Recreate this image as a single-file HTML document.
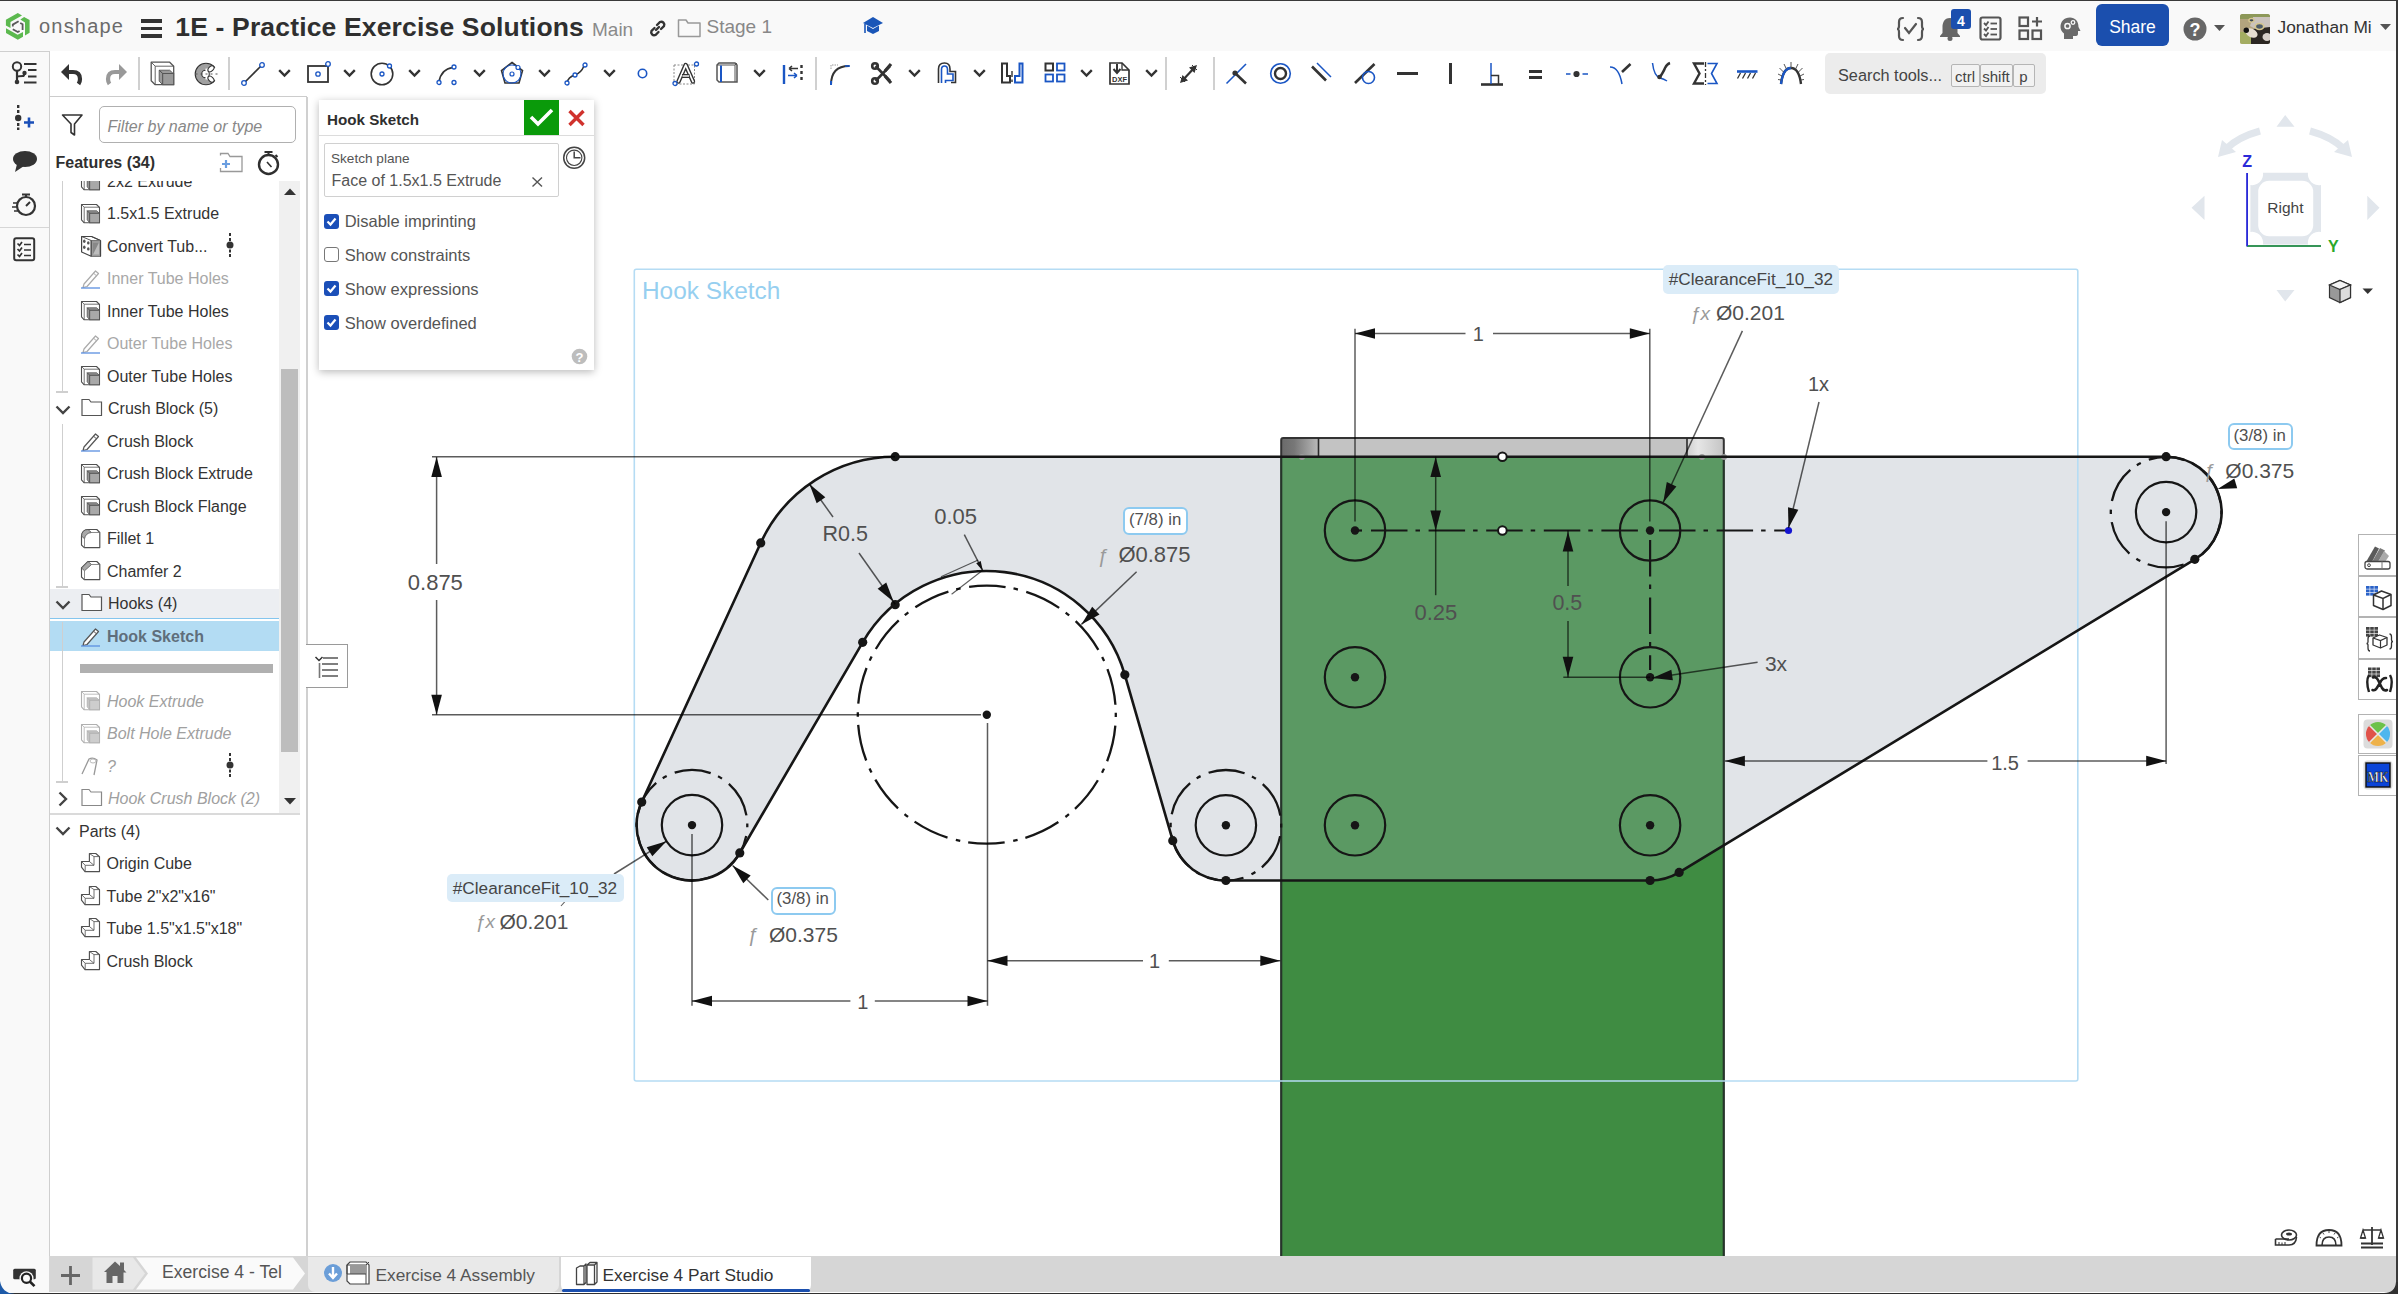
<!DOCTYPE html><html><head><meta charset="utf-8"><style>
html,body{margin:0;padding:0;}
body{width:2398px;height:1294px;position:relative;overflow:hidden;background:#fff;font-family:"Liberation Sans",sans-serif;}
.t{position:absolute;white-space:nowrap;line-height:1;}
svg{overflow:visible;}
</style></head><body>
<svg style="position:absolute;left:0;top:0" width="2398" height="1294" viewBox="0 0 2398 1294"><defs><clipPath id="rg"><path d="M895.20 456.70 L2166.10 456.70 A55.3 55.3 0 0 1 2194.79 559.37 L1679.14 872.38 A55.95957137052125 55.95957137052125 0 0 1 1650.10 880.50 L1225.90 880.50 A55.3 55.3 0 0 1 1172.77 840.65 L1124.85 674.81 A143.7 143.7 0 0 0 862.68 642.29 L739.77 852.97 A55.3 55.3 0 0 1 641.74 802.03 L760.70 542.94 A148.0 148.0 0 0 1 895.20 456.70 Z"/></clipPath><linearGradient id="capL" x1="0" x2="1"><stop offset="0" stop-color="#6a6a6a"/><stop offset="0.35" stop-color="#777"/><stop offset="1" stop-color="#b9b9b9"/></linearGradient><linearGradient id="capR" x1="0" x2="1"><stop offset="0" stop-color="#cfcfcf"/><stop offset="0.3" stop-color="#e6e6e6"/><stop offset="1" stop-color="#c4c4c4"/></linearGradient></defs><path d="M895.20 456.70 L2166.10 456.70 A55.3 55.3 0 0 1 2194.79 559.37 L1679.14 872.38 A55.95957137052125 55.95957137052125 0 0 1 1650.10 880.50 L1225.90 880.50 A55.3 55.3 0 0 1 1172.77 840.65 L1124.85 674.81 A143.7 143.7 0 0 0 862.68 642.29 L739.77 852.97 A55.3 55.3 0 0 1 641.74 802.03 L760.70 542.94 A148.0 148.0 0 0 1 895.20 456.70 Z" fill="#e1e4e8"/><rect x="1281.2" y="457" width="442.5999999999999" height="830" fill="#3f8c42"/><rect x="1281.2" y="457" width="442.5999999999999" height="830" fill="#5b9963" clip-path="url(#rg)"/><rect x="1281.2" y="438" width="442.5999999999999" height="19" fill="#c3c3c3"/><rect x="1281.2" y="438" width="37" height="19" fill="url(#capL)"/><rect x="1687" y="438" width="36.799999999999955" height="19" fill="url(#capR)"/><path d="M1281.2 457 V440 Q1281.2 438 1283.2 438 H1721.8 Q1723.8 438 1723.8 440 V457" fill="none" stroke="#333" stroke-width="2"/><path d="M1318.5 438 V457 M1687 438 V457" stroke="#2a2a2a" stroke-width="1.6"/><path d="M1281.2 457 V1290 M1723.8 457 V1290" stroke="#26342a" stroke-width="2.2"/><circle cx="1302" cy="457" r="3" fill="#9a9a9a"/><circle cx="1702" cy="457" r="3" fill="#9a9a9a"/><circle cx="1724" cy="457" r="3" fill="#9a9a9a"/><rect x="634.3" y="269.3" width="1443.5" height="811.7" rx="2" fill="none" stroke="#b5dcf4" stroke-width="1.6"/><path d="M895.20 456.70 L2166.10 456.70 A55.3 55.3 0 0 1 2194.79 559.37 L1679.14 872.38 A55.95957137052125 55.95957137052125 0 0 1 1650.10 880.50 L1225.90 880.50 A55.3 55.3 0 0 1 1172.77 840.65 L1124.85 674.81 A143.7 143.7 0 0 0 862.68 642.29 L739.77 852.97 A55.3 55.3 0 0 1 641.74 802.03 L760.70 542.94 A148.0 148.0 0 0 1 895.20 456.70" fill="none" stroke="#161616" stroke-width="2.6"/><circle cx="692.0" cy="825.1" r="55.3" fill="none" stroke="#161616" stroke-width="2.3" stroke-dasharray="36.696 8.043 4.524 8.646" stroke-dashoffset="47.002"/><circle cx="1225.9" cy="825.3" r="55.3" fill="none" stroke="#161616" stroke-width="2.3" stroke-dasharray="36.696 8.043 4.524 8.646" stroke-dashoffset="47.002"/><circle cx="2166.1" cy="512.1" r="55.3" fill="none" stroke="#161616" stroke-width="2.3" stroke-dasharray="36.696 8.043 4.524 8.646" stroke-dashoffset="47.002"/><circle cx="986.8" cy="714.7" r="129.0" fill="none" stroke="#161616" stroke-width="2.3" stroke-dasharray="36.687 8.041 4.523 8.644" stroke-dashoffset="46.989"/><circle cx="692.0" cy="825.1" r="30.2" fill="none" stroke="#161616" stroke-width="2.2"/><circle cx="1225.9" cy="825.3" r="30.2" fill="none" stroke="#161616" stroke-width="2.2"/><circle cx="2166.1" cy="512.1" r="30.2" fill="none" stroke="#161616" stroke-width="2.2"/><circle cx="1355" cy="530.5" r="30.2" fill="none" stroke="#161616" stroke-width="2.2"/><circle cx="1650.1" cy="530.5" r="30.2" fill="none" stroke="#161616" stroke-width="2.2"/><circle cx="1355" cy="677.3" r="30.2" fill="none" stroke="#161616" stroke-width="2.2"/><circle cx="1650.1" cy="677.3" r="30.2" fill="none" stroke="#161616" stroke-width="2.2"/><circle cx="1355" cy="825.3" r="30.2" fill="none" stroke="#161616" stroke-width="2.2"/><circle cx="1650.1" cy="825.3" r="30.2" fill="none" stroke="#161616" stroke-width="2.2"/><circle cx="692.0" cy="825.1" r="4.2" fill="#161616"/><circle cx="986.8" cy="714.7" r="4.2" fill="#161616"/><circle cx="1225.9" cy="825.3" r="4.2" fill="#161616"/><circle cx="2166.1" cy="512.1" r="4.2" fill="#161616"/><circle cx="1355" cy="530.5" r="4.2" fill="#161616"/><circle cx="1650.1" cy="530.5" r="4.2" fill="#161616"/><circle cx="1355" cy="677.3" r="4.2" fill="#161616"/><circle cx="1650.1" cy="677.3" r="4.2" fill="#161616"/><circle cx="1355" cy="825.3" r="4.2" fill="#161616"/><circle cx="1650.1" cy="825.3" r="4.2" fill="#161616"/><circle cx="895.20" cy="456.70" r="4.6" fill="#161616"/><circle cx="760.70" cy="542.94" r="4.6" fill="#161616"/><circle cx="641.74" cy="802.03" r="4.6" fill="#161616"/><circle cx="739.77" cy="852.97" r="4.6" fill="#161616"/><circle cx="862.68" cy="642.29" r="4.6" fill="#161616"/><circle cx="895.20" cy="604.70" r="4.6" fill="#161616"/><circle cx="1124.85" cy="674.81" r="4.6" fill="#161616"/><circle cx="1172.77" cy="840.65" r="4.6" fill="#161616"/><circle cx="1225.90" cy="880.50" r="4.6" fill="#161616"/><circle cx="2166.10" cy="456.70" r="4.6" fill="#161616"/><circle cx="2194.79" cy="559.37" r="4.6" fill="#161616"/><circle cx="1650.10" cy="880.50" r="4.6" fill="#161616"/><circle cx="1679.14" cy="872.38" r="4.6" fill="#161616"/><path d="M1355 530.5 H1362" stroke="#161616" stroke-width="2.2"/><path d="M1371 530.5 H1788" stroke="#161616" stroke-width="2.2" stroke-dasharray="36.5 8 4.5 8.6"/><path d="M1650.1 540 V670" stroke="#161616" stroke-width="2.2" stroke-dasharray="36.5 8 4.5 8.6"/><circle cx="1502.4" cy="456.7" r="4.3" fill="#fff" stroke="#161616" stroke-width="2"/><circle cx="1502.4" cy="530.5" r="4.3" fill="#fff" stroke="#161616" stroke-width="2"/><circle cx="1788.5" cy="530.5" r="3.6" fill="#1414d0"/></svg>
<svg style="position:absolute;left:0;top:0" width="2398" height="1294" viewBox="0 0 2398 1294"><path d="M432.00 456.70 L895.00 456.70" stroke="rgba(0,0,0,0.64)" stroke-width="1.5" fill="none"/><path d="M432.00 714.70 L981.00 714.70" stroke="rgba(0,0,0,0.64)" stroke-width="1.5" fill="none"/><path d="M436.60 457.00 L436.60 564.00" stroke="rgba(0,0,0,0.64)" stroke-width="1.5" fill="none"/><path d="M436.60 600.00 L436.60 714.70" stroke="rgba(0,0,0,0.64)" stroke-width="1.5" fill="none"/><path d="M436.60 457.00 L441.90 477.00 L431.30 477.00 Z" fill="#111"/><path d="M436.60 714.70 L431.30 694.70 L441.90 694.70 Z" fill="#111"/><path d="M809.40 484.00 L833.00 517.00" stroke="rgba(0,0,0,0.64)" stroke-width="1.5" fill="none"/><path d="M859.00 553.00 L895.20 604.20" stroke="rgba(0,0,0,0.64)" stroke-width="1.5" fill="none"/><path d="M809.40 484.00 L825.31 497.22 L816.68 503.37 Z" fill="#111"/><path d="M893.60 601.80 L877.63 588.64 L886.24 582.46 Z" fill="#111"/><path d="M964.30 534.60 L982.90 571.00" stroke="rgba(0,0,0,0.64)" stroke-width="1.5" fill="none"/><path d="M941.00 576.80 L978.20 560.10" stroke="rgba(0,0,0,0.64)" stroke-width="1.1" fill="none"/><path d="M951.60 594.20 L981.70 571.00" stroke="rgba(0,0,0,0.64)" stroke-width="1.1" fill="none"/><path d="M982.90 571.00 L976.22 563.15 L980.69 560.93 Z" fill="#111"/><path d="M1136.60 571.80 L1081.40 624.40" stroke="rgba(0,0,0,0.64)" stroke-width="1.5" fill="none"/><path d="M1081.40 624.40 L1092.18 606.74 L1099.51 614.39 Z" fill="#111"/><path d="M1355.00 328.70 L1355.00 521.60" stroke="rgba(0,0,0,0.64)" stroke-width="1.5" fill="none"/><path d="M1649.80 328.70 L1649.80 521.60" stroke="rgba(0,0,0,0.64)" stroke-width="1.5" fill="none"/><path d="M1355.00 333.50 L1465.50 333.50" stroke="rgba(0,0,0,0.64)" stroke-width="1.5" fill="none"/><path d="M1493.00 333.50 L1649.80 333.50" stroke="rgba(0,0,0,0.64)" stroke-width="1.5" fill="none"/><path d="M1355.00 333.50 L1375.00 328.20 L1375.00 338.80 Z" fill="#111"/><path d="M1649.80 333.50 L1629.80 338.80 L1629.80 328.20 Z" fill="#111"/><path d="M1742.40 330.90 L1663.20 502.50" stroke="rgba(0,0,0,0.64)" stroke-width="1.5" fill="none"/><path d="M1663.20 502.50 L1666.79 482.12 L1676.41 486.58 Z" fill="#111"/><path d="M1819.00 402.00 L1788.50 527.90" stroke="rgba(0,0,0,0.64)" stroke-width="1.5" fill="none"/><path d="M1788.50 527.90 L1788.02 507.22 L1798.32 509.69 Z" fill="#111"/><path d="M1435.70 456.70 L1435.70 595.20" stroke="rgba(0,0,0,0.64)" stroke-width="1.5" fill="none"/><path d="M1435.70 456.90 L1441.00 476.90 L1430.40 476.90 Z" fill="#111"/><path d="M1435.70 530.50 L1430.40 510.50 L1441.00 510.50 Z" fill="#111"/><path d="M1568.00 530.50 L1568.00 586.00" stroke="rgba(0,0,0,0.64)" stroke-width="1.5" fill="none"/><path d="M1568.00 621.00 L1568.00 677.30" stroke="rgba(0,0,0,0.64)" stroke-width="1.5" fill="none"/><path d="M1563.30 677.30 L1650.00 677.30" stroke="rgba(0,0,0,0.64)" stroke-width="1.5" fill="none"/><path d="M1568.00 531.50 L1573.30 551.50 L1562.70 551.50 Z" fill="#111"/><path d="M1568.00 676.80 L1562.70 656.80 L1573.30 656.80 Z" fill="#111"/><path d="M1757.60 662.30 L1652.30 677.90" stroke="rgba(0,0,0,0.64)" stroke-width="1.5" fill="none"/><path d="M1652.30 677.90 L1671.34 669.79 L1672.85 680.28 Z" fill="#111"/><path d="M2166.10 521.30 L2166.10 764.00" stroke="rgba(0,0,0,0.64)" stroke-width="1.5" fill="none"/><path d="M1724.90 761.00 L1987.40 761.00" stroke="rgba(0,0,0,0.64)" stroke-width="1.5" fill="none"/><path d="M2027.60 761.00 L2166.20 761.00" stroke="rgba(0,0,0,0.64)" stroke-width="1.5" fill="none"/><path d="M1724.90 761.00 L1744.90 755.70 L1744.90 766.30 Z" fill="#111"/><path d="M2166.20 761.00 L2146.20 766.30 L2146.20 755.70 Z" fill="#111"/><path d="M2217.60 488.90 L2234.31 478.57 L2237.23 488.13 Z" fill="#111"/><path d="M692.00 834.00 L692.00 1005.80" stroke="rgba(0,0,0,0.64)" stroke-width="1.5" fill="none"/><path d="M987.50 723.00 L987.50 1005.80" stroke="rgba(0,0,0,0.64)" stroke-width="1.5" fill="none"/><path d="M692.00 1001.00 L850.40 1001.00" stroke="rgba(0,0,0,0.64)" stroke-width="1.5" fill="none"/><path d="M874.80 1001.00 L987.50 1001.00" stroke="rgba(0,0,0,0.64)" stroke-width="1.5" fill="none"/><path d="M692.00 1001.00 L712.00 995.70 L712.00 1006.30 Z" fill="#111"/><path d="M987.50 1001.00 L967.50 1006.30 L967.50 995.70 Z" fill="#111"/><path d="M987.50 960.80 L1143.00 960.80" stroke="rgba(0,0,0,0.64)" stroke-width="1.5" fill="none"/><path d="M1168.80 960.80 L1280.30 960.80" stroke="rgba(0,0,0,0.64)" stroke-width="1.5" fill="none"/><path d="M987.50 960.80 L1007.50 955.50 L1007.50 966.10 Z" fill="#111"/><path d="M1280.30 960.80 L1260.30 966.10 L1260.30 955.50 Z" fill="#111"/><path d="M614.00 874.00 L666.50 841.20" stroke="rgba(0,0,0,0.64)" stroke-width="1.5" fill="none"/><path d="M666.50 841.20 L652.32 856.27 L646.72 847.27 Z" fill="#111"/><path d="M565.00 901.50 L561.00 906.00" stroke="rgba(0,0,0,0.64)" stroke-width="1.1" fill="none"/><path d="M768.30 900.00 L732.60 865.50" stroke="rgba(0,0,0,0.64)" stroke-width="1.5" fill="none"/><path d="M732.60 865.50 L750.66 875.59 L743.29 883.21 Z" fill="#111"/></svg>
<div class="t" style="left:642.0px;top:278.6px;font-size:24.4px;color:#96cff0;">Hook Sketch</div>
<div class="t" style="left:407.8px;top:571.6px;font-size:22px;color:#505050;">0.875</div>
<div class="t" style="left:822.5px;top:523.8px;font-size:21.5px;color:#505050;">R0.5</div>
<div class="t" style="left:934.2px;top:506.0px;font-size:22px;color:#505050;">0.05</div>
<div style="position:absolute;left:1123px;top:507px;width:61.200000000000045px;height:23.600000000000023px;border:2px solid #8dcaf0;border-radius:6px;background:#fff;"></div>
<div class="t" style="left:1129.0px;top:512.3px;font-size:16.8px;color:#505050;">(7/8) in</div>
<div class="t" style="left:1097.0px;top:545.7px;font-size:20px;color:#9a9a9a;font-style:italic;font-family:"Liberation Serif",serif;">ƒ</div>
<div class="t" style="left:1118.4px;top:544.0px;font-size:22px;color:#505050;">Ø0.875</div>
<div class="t" style="left:1472.7px;top:324.4px;font-size:20px;color:#505050;">1</div>
<div style="position:absolute;left:1662.8px;top:264.8px;width:176.3px;height:29.2px;background:#dbecf8;border-radius:5px;"></div>
<div class="t" style="left:1668.7px;top:271.2px;font-size:17.2px;color:#454545;">#ClearanceFit_10_32</div>
<div class="t" style="left:1690.0px;top:303.9px;font-size:19px;color:#9a9a9a;font-style:italic;font-family:"Liberation Serif",serif;">ƒx</div>
<div class="t" style="left:1716.0px;top:302.2px;font-size:21px;color:#505050;">Ø0.201</div>
<div class="t" style="left:1808.0px;top:373.6px;font-size:20px;color:#505050;">1x</div>
<div class="t" style="left:1414.4px;top:601.9px;font-size:22px;color:#505050;">0.25</div>
<div class="t" style="left:1552.4px;top:593.2px;font-size:21.5px;color:#505050;">0.5</div>
<div class="t" style="left:1764.9px;top:652.8px;font-size:21px;color:#505050;">3x</div>
<div class="t" style="left:1991.2px;top:753.0px;font-size:20px;color:#505050;">1.5</div>
<div style="position:absolute;left:2227.6px;top:422.9px;width:61.40000000000009px;height:23.30000000000001px;border:2px solid #8dcaf0;border-radius:6px;background:#fff;"></div>
<div class="t" style="left:2233.5px;top:427.5px;font-size:16.8px;color:#505050;">(3/8) in</div>
<div class="t" style="left:2203.6px;top:461.1px;font-size:20px;color:#9a9a9a;font-style:italic;font-family:"Liberation Serif",serif;">ƒ</div>
<div class="t" style="left:2225.3px;top:460.2px;font-size:21px;color:#505050;">Ø0.375</div>
<div class="t" style="left:857.2px;top:991.6px;font-size:20px;color:#505050;">1</div>
<div class="t" style="left:1148.9px;top:951.4px;font-size:20px;color:#505050;">1</div>
<div style="position:absolute;left:446.9px;top:874px;width:177.2px;height:28.2px;background:#dbecf8;border-radius:5px;"></div>
<div class="t" style="left:452.8px;top:879.9px;font-size:17.2px;color:#454545;">#ClearanceFit_10_32</div>
<div class="t" style="left:475.0px;top:912.4px;font-size:19px;color:#9a9a9a;font-style:italic;font-family:"Liberation Serif",serif;">ƒx</div>
<div class="t" style="left:499.5px;top:910.7px;font-size:21px;color:#505050;">Ø0.201</div>
<div style="position:absolute;left:770.9px;top:886.5px;width:61.30000000000007px;height:24.100000000000023px;border:2px solid #8dcaf0;border-radius:6px;background:#fff;"></div>
<div class="t" style="left:776.5px;top:891.3px;font-size:16.8px;color:#505050;">(3/8) in</div>
<div class="t" style="left:747.0px;top:924.7px;font-size:20px;color:#9a9a9a;font-style:italic;font-family:"Liberation Serif",serif;">ƒ</div>
<div class="t" style="left:769.0px;top:923.8px;font-size:21px;color:#505050;">Ø0.375</div>
<svg style="position:absolute;left:2180px;top:105px" width="210" height="210" viewBox="2180 105 210 210">
<path d="M2285.2 115.1 L2294.5 126.7 L2276.5 126.7 Z M2285.2 301.5 L2294.5 290 L2276.5 290 Z M2191.5 207.8 L2204.5 195.7 L2204.5 219.9 Z M2379.5 207.8 L2367.3 195.7 L2367.3 219.9 Z" fill="#e1e6ec"/>
<path d="M2260 131 Q2238 137 2226 149" fill="none" stroke="#e1e6ec" stroke-width="7"/>
<path d="M2218 157 L2222 140 L2236 152 Z" fill="#e1e6ec"/>
<path d="M2310 131 Q2332 137 2344 149" fill="none" stroke="#e1e6ec" stroke-width="7"/>
<path d="M2352 157 L2348 140 L2334 152 Z" fill="#e1e6ec"/>
<path d="M2263 172.7 H2308 A11 11 0 0 0 2321 185 V232 A11 11 0 0 0 2308 244.5 H2263 A11 11 0 0 0 2250.4 232 V185 A11 11 0 0 0 2263 172.7 Z" fill="#e1e6ec"/>
<rect x="2258.2" y="180.8" width="55" height="55.4" rx="11" fill="#fff"/>
<path d="M2247.2 173 V246 H2321" fill="none" stroke="#2a2ad8" stroke-width="1.6"/>
<path d="M2321 246 H2247.2" stroke="#2aa82a" stroke-width="1.6"/>
<path d="M2247.2 173 V246" stroke="#2a2ad8" stroke-width="1.6"/>
</svg>
<div class="t" style="left:2285.4px;top:199.6px;font-size:15.5px;color:#444;transform:translateX(-50%);">Right</div>
<div class="t" style="left:2247.2px;top:153.5px;font-size:16px;color:#2a2ad8;font-weight:700;transform:translateX(-50%);">Z</div>
<div class="t" style="left:2333.4px;top:239.1px;font-size:16px;color:#2aa82a;font-weight:700;transform:translateX(-50%);">Y</div>
<svg style="position:absolute;left:2328px;top:279px;" width="25" height="25" viewBox="0 0 25 25"><path d="M12 1.5 L22.5 6 V18.5 L12 23.5 L1.5 18.5 V6 Z" fill="#999" stroke="#333" stroke-width="1.2"/><path d="M1.5 6 L12 10.5 L22.5 6 L12 1.5 Z" fill="#f4f4f4" stroke="#333" stroke-width="1.2"/><path d="M12 10.5 V23.5 L22.5 18.5 V6 Z" fill="#dcdcdc" stroke="#333" stroke-width="1.2"/></svg>
<svg style="position:absolute;left:2362px;top:288px;" width="12" height="7" viewBox="0 0 12 7"><path d="M0.5 0.5 H11 L5.75 6 Z" fill="#333"/></svg>
<div style="position:absolute;left:2358.4px;top:534px;width:40px;height:42.299999999999955px;border:1px solid #b3b3b3;box-sizing:border-box;background:#fff;"></div>
<div style="position:absolute;left:2358.4px;top:576.3px;width:40px;height:40.700000000000045px;border:1px solid #b3b3b3;box-sizing:border-box;background:#fff;"></div>
<div style="position:absolute;left:2358.4px;top:617px;width:40px;height:42px;border:1px solid #b3b3b3;box-sizing:border-box;background:#fff;"></div>
<div style="position:absolute;left:2358.4px;top:659px;width:40px;height:41px;border:1px solid #b3b3b3;box-sizing:border-box;background:#fff;"></div>
<div style="position:absolute;left:2358.4px;top:713.6px;width:40px;height:40.89999999999998px;border:1px solid #b3b3b3;box-sizing:border-box;background:#fff;"></div>
<div style="position:absolute;left:2358.4px;top:754.5px;width:40px;height:41.5px;border:1px solid #b3b3b3;box-sizing:border-box;background:#fff;"></div>
<svg style="position:absolute;left:2363px;top:543px;" width="30" height="28" viewBox="0 0 30 28"><path d="M3 19 L12 3.5 L16 5.5 L9 19 Z" fill="#5a5a5a"/><path d="M9 19 L17 5 L22 7.5 L15 19 Z" fill="#7a7a7a"/><path d="M15 19 L21 8 L26 13 L22 19 Z" fill="#aaa"/><rect x="2" y="18.5" width="25" height="7.5" rx="2" fill="#fff" stroke="#444" stroke-width="1.3"/><circle cx="6" cy="22.2" r="1.4" fill="none" stroke="#444" stroke-width="1"/><path d="M19 18.5 V26" stroke="#777" stroke-width="1"/></svg>
<svg style="position:absolute;left:2364px;top:584px;" width="30" height="28" viewBox="0 0 30 28"><g fill="#2a62c8"><rect x="2.0" y="2.0" width="3.6" height="2.8"/><rect x="2.0" y="5.4" width="3.6" height="2.8"/><rect x="2.0" y="8.8" width="3.6" height="2.8"/><rect x="6.2" y="2.0" width="3.6" height="2.8"/><rect x="6.2" y="5.4" width="3.6" height="2.8"/><rect x="6.2" y="8.8" width="3.6" height="2.8"/><rect x="10.4" y="2.0" width="3.6" height="2.8"/><rect x="10.4" y="5.4" width="3.6" height="2.8"/><rect x="10.4" y="8.8" width="3.6" height="2.8"/></g><path d="M9.5 11 L17.5 7 L27 10.5 V21.5 L19 25.5 L9.5 21.5 Z" fill="#fff" stroke="#333" stroke-width="1.5" stroke-linejoin="round"/><path d="M9.5 11 L19 14.5 L27 10.5 M19 14.5 V25.5" fill="none" stroke="#333" stroke-width="1.5"/></svg>
<svg style="position:absolute;left:2364px;top:625px;" width="30" height="28" viewBox="0 0 30 28"><g fill="#444"><rect x="2.0" y="2.0" width="3.6" height="2.8"/><rect x="2.0" y="5.4" width="3.6" height="2.8"/><rect x="2.0" y="8.8" width="3.6" height="2.8"/><rect x="6.2" y="2.0" width="3.6" height="2.8"/><rect x="6.2" y="5.4" width="3.6" height="2.8"/><rect x="6.2" y="8.8" width="3.6" height="2.8"/><rect x="10.4" y="2.0" width="3.6" height="2.8"/><rect x="10.4" y="5.4" width="3.6" height="2.8"/><rect x="10.4" y="8.8" width="3.6" height="2.8"/></g><path d="M9 13 L15.5 10 L23 12.5 V20 L16.5 23 L9 20 Z" fill="#fff" stroke="#333" stroke-width="1.3" stroke-linejoin="round"/><path d="M9 13 L16.5 15.5 L23 12.5 M16.5 15.5 V23" fill="none" stroke="#333" stroke-width="1.2"/><path d="M6 11 Q4 11 4 14 V17 Q4 18.5 2.5 18.5 Q4 18.5 4 20 V23 Q4 26 6 26 M25.5 9 Q27.5 9 27.5 12 V15 Q27.5 16.5 29 16.5 Q27.5 16.5 27.5 18 V21 Q27.5 24 25.5 24" fill="none" stroke="#333" stroke-width="1.3"/></svg>
<svg style="position:absolute;left:2364px;top:666px;" width="30" height="28" viewBox="0 0 30 28"><g fill="#444"><rect x="4.0" y="1.5" width="3.6" height="2.8"/><rect x="4.0" y="4.9" width="3.6" height="2.8"/><rect x="4.0" y="8.3" width="3.6" height="2.8"/><rect x="8.2" y="1.5" width="3.6" height="2.8"/><rect x="8.2" y="4.9" width="3.6" height="2.8"/><rect x="8.2" y="8.3" width="3.6" height="2.8"/><rect x="12.4" y="1.5" width="3.6" height="2.8"/><rect x="12.4" y="4.9" width="3.6" height="2.8"/><rect x="12.4" y="8.3" width="3.6" height="2.8"/></g><path d="M5 9 Q1.5 15 5 26 M26 9 Q29.5 15 26 26" fill="none" stroke="#222" stroke-width="2.4"/><path d="M9 11.5 Q12 10 14 14 L18 22 Q20 25.5 23 24 M22 12 Q18 12 16 17 L12.5 22.5 Q11 25 8.5 24" fill="none" stroke="#222" stroke-width="2.6" stroke-linecap="round"/></svg>
<svg style="position:absolute;left:2363px;top:719px;" width="30" height="30" viewBox="0 0 30 30"><rect x="0.5" y="0.5" width="29" height="29" rx="4" fill="#dcdcdc"/><path d="M15 15 L6.5 6.5 A12 12 0 0 1 23.5 6.5 Z" fill="#6cc24a"/><path d="M15 15 L23.5 6.5 A12 12 0 0 1 23.5 23.5 Z" fill="#4fb6ee"/><path d="M15 15 L23.5 23.5 A12 12 0 0 1 6.5 23.5 Z" fill="#eeb24a"/><path d="M15 15 L6.5 23.5 A12 12 0 0 1 6.5 6.5 Z" fill="#e0524a"/><path d="M6.5 6.5 L23.5 23.5 M23.5 6.5 L6.5 23.5" stroke="#e8e8e8" stroke-width="1.6"/></svg>
<svg style="position:absolute;left:2363px;top:760px;" width="30" height="30" viewBox="0 0 30 30"><rect x="0.5" y="0.5" width="29" height="29" rx="4" fill="#dcdcdc"/><rect x="3" y="3" width="24" height="24" fill="#0a44d8" stroke="#111" stroke-width="1.4"/><text x="15" y="21.5" font-family="Liberation Serif" font-weight="700" font-size="15" fill="#fff" text-anchor="middle" textLength="21" lengthAdjust="spacingAndGlyphs" stroke="#111" stroke-width="0.6">MK</text></svg>
<div style="position:absolute;left:0px;top:0px;width:2398px;height:52px;background:#f9f9f9;"></div>
<div style="position:absolute;left:0px;top:0px;width:2398px;height:1px;background:#3a3a3a;"></div>
<svg style="position:absolute;left:0px;top:8px;" width="40" height="38" viewBox="0 0 40 38"><g fill="#5cb94f"><path d="M5.9 11.8 L17.8 5 L22 7.4 L10.5 14 V20 L5.9 17.5 Z"/><path d="M20.3 11.4 L24.1 9 L29.6 12 V24.8 L25 27.4 V14.4 Z"/><path d="M6 20.3 L17.6 26.7 L23 23.9 V28.7 L17.8 31.7 L6 25 Z"/></g>
<g fill="none" stroke="#5a5a5a" stroke-width="1.8"><path d="M18.6 13.2 L12.8 16.6 V18.4"/><path d="M12.8 21.2 L17.8 24 L19.6 23"/><path d="M20.2 15 L22.6 16.3 V22"/></g></svg>
<div class="t" style="left:39.0px;top:15.5px;font-size:20px;color:#6b6b6b;letter-spacing:1.2px;">onshape</div>
<div style="position:absolute;left:141px;top:19px;width:21px;height:3.5px;background:#333;"></div>
<div style="position:absolute;left:141px;top:26.5px;width:21px;height:3.5px;background:#333;"></div>
<div style="position:absolute;left:141px;top:34px;width:21px;height:3.5px;background:#333;"></div>
<div class="t" style="left:175.3px;top:14.1px;font-size:26.5px;color:#2f2f2f;font-weight:700;letter-spacing:0.16px;">1E - Practice Exercise Solutions</div>
<div class="t" style="left:592.0px;top:19.8px;font-size:19px;color:#8a8a8a;">Main</div>
<svg style="position:absolute;left:647px;top:18px;" width="21" height="21" viewBox="0 0 21 21"><g fill="none" stroke="#333" stroke-width="2.4" stroke-linecap="round"><path d="M9 12 L12 9"/><path d="M7.5 10 L4.5 13 a3 3 0 0 0 4 4 L11.5 14"/><path d="M10 7 L13 4 a3 3 0 0 1 4 4 L14 11"/></g></svg>
<svg style="position:absolute;left:677px;top:18px;" width="25" height="20" viewBox="0 0 25 20"><path d="M1.5 2 H9 L11 5 H23 V18.5 H1.5 Z" fill="none" stroke="#999" stroke-width="1.5" stroke-linejoin="round"/></svg>
<div class="t" style="left:706.5px;top:17.4px;font-size:19px;color:#888;">Stage 1</div>
<svg style="position:absolute;left:862px;top:15px;" width="22" height="21" viewBox="0 0 22 21"><path d="M1 8 L11 2 L21 8 L11 13 Z" fill="#1a56b8"/><path d="M5 10.5 V16 L11 19 L17 16 V10.5 L11 14 Z" fill="#1a56b8"/><path d="M3 9 V18" stroke="#1a56b8" stroke-width="1.6"/></svg>
<svg style="position:absolute;left:1896px;top:16px;" width="29" height="26" viewBox="0 0 29 26"><g fill="none" stroke="#555" stroke-width="2.2" stroke-linecap="round"><path d="M7 2 Q3 2 3 6 V10 Q3 13 1 13 Q3 13 3 16 V20 Q3 24 7 24"/><path d="M22 2 Q26 2 26 6 V10 Q26 13 28 13 Q26 13 26 16 V20 Q26 24 22 24"/><path d="M9 12 L13 17 L20 8"/></g></svg>
<svg style="position:absolute;left:1938px;top:16px;" width="24" height="25" viewBox="0 0 24 25"><path d="M12 2 C6 2 4.5 7 4.5 11 V17 L2 20 V21 H22 V20 L19.5 17 V11 C19.5 7 18 2 12 2 Z" fill="#666"/><circle cx="12" cy="22.5" r="2.5" fill="#666"/></svg>
<div style="position:absolute;left:1951px;top:9px;width:20px;height:20px;background:#1b4fae;border-radius:3px;"></div>
<div class="t" style="left:1961.0px;top:13.5px;font-size:14px;color:#fff;font-weight:700;transform:translateX(-50%);">4</div>
<svg style="position:absolute;left:1979px;top:16px;" width="23" height="25" viewBox="0 0 23 25"><rect x="1.5" y="1.5" width="20" height="22" rx="2" fill="none" stroke="#555" stroke-width="2.2"/><g stroke="#555" stroke-width="1.8" fill="none"><path d="M5 7 L7 9 L9.5 5.5"/><path d="M5 12.5 L7 14.5 L9.5 11"/><path d="M5 18 L7 20 L9.5 16.5"/><path d="M11.5 7.5 H18"/><path d="M11.5 13 H18"/><path d="M11.5 18.5 H18"/></g></svg>
<svg style="position:absolute;left:2018px;top:16px;" width="26" height="25" viewBox="0 0 26 25"><g fill="none" stroke="#555" stroke-width="2.2"><rect x="1.5" y="1.5" width="8.5" height="8.5"/><rect x="1.5" y="14.5" width="8.5" height="8.5"/><rect x="14.5" y="14.5" width="8.5" height="8.5"/><path d="M19 1 V10.5 M14 5.5 H24"/></g></svg>
<svg style="position:absolute;left:2059px;top:16px;" width="24" height="25" viewBox="0 0 24 25"><path d="M11 1.5 C5 1.5 1.5 5.5 1.5 11 C1.5 14 3 16 5 17.5 V23 H14 V20 H17 C18.5 20 19 19 19 17.5 V15 H21.5 L19.5 11 C19.5 5 16 1.5 11 1.5 Z" fill="#6a6a6a"/><circle cx="8.5" cy="10" r="2.6" fill="none" stroke="#f9f9f9" stroke-width="1.5"/><circle cx="14" cy="6.5" r="1.8" fill="none" stroke="#f9f9f9" stroke-width="1.3"/></svg>
<div style="position:absolute;left:2096px;top:4px;width:73px;height:42px;background:#1b4fae;border-radius:6px;"></div>
<div class="t" style="left:2132.5px;top:18.5px;font-size:17.5px;color:#fff;transform:translateX(-50%);">Share</div>
<svg style="position:absolute;left:2182px;top:16px;" width="26" height="26" viewBox="0 0 26 26"><circle cx="13" cy="13" r="11.5" fill="#676767"/><text x="13" y="19.5" font-family="Liberation Sans" font-weight="700" font-size="18" fill="#fff" text-anchor="middle">?</text></svg>
<svg style="position:absolute;left:2213px;top:24px;" width="13" height="8" viewBox="0 0 13 8"><path d="M1 1 H12 L6.5 7 Z" fill="#555"/></svg>
<svg style="position:absolute;left:2240px;top:14px;" width="30" height="30" viewBox="0 0 30 30"><defs><clipPath id="avc"><rect width="30" height="30" rx="2.5"/></clipPath></defs><g clip-path="url(#avc)">
<rect width="30" height="30" fill="#b3a47e"/><rect x="0" y="0" width="30" height="5" fill="#8d9858"/><rect x="0" y="18" width="11" height="12" fill="#a4ad62"/>
<path d="M13 3 H30 V18 H21 L10 12 Z" fill="#cbc3bc"/>
<path d="M13 15 L30 13 V30 H11 V22 Z" fill="#2b2622"/>
<ellipse cx="27" cy="23" rx="4.5" ry="4" fill="#d6cec8"/>
<ellipse cx="11.5" cy="19" rx="6.5" ry="4.2" transform="rotate(28 11.5 19)" fill="#e6ddd0"/>
<circle cx="6.3" cy="16.2" r="2.7" fill="#111"/>
<ellipse cx="19.5" cy="12.5" rx="4.2" ry="3" fill="#4e5c6a" stroke="#d6c68e" stroke-width="1.7"/>
<ellipse cx="11.5" cy="6.3" rx="2.6" ry="1.8" fill="#3e4a56" stroke="#d6c68e" stroke-width="1.4"/>
</g></svg>
<div class="t" style="left:2277.5px;top:19.2px;font-size:17.3px;color:#333;">Jonathan Mi</div>
<svg style="position:absolute;left:2379px;top:23px;" width="13" height="8" viewBox="0 0 13 8"><path d="M1 1 H12 L6.5 7 Z" fill="#555"/></svg>
<div style="position:absolute;left:0px;top:51px;width:50px;height:1243px;background:#f9f9f9;"></div>
<div style="position:absolute;left:50px;top:51px;width:2348px;height:46px;background:#fff;"></div>
<div style="position:absolute;left:0px;top:51px;width:50px;height:1px;background:#cfcfcf;"></div>
<div style="position:absolute;left:49px;top:51px;width:1px;height:1205px;background:#cfcfcf;"></div>
<div style="position:absolute;left:50px;top:96px;width:257px;height:1px;background:#cccccc;"></div>
<svg style="position:absolute;left:11px;top:61px;" width="28" height="26" viewBox="0 0 28 26"><circle cx="6" cy="5.5" r="4.2" fill="none" stroke="#333" stroke-width="2"/><path d="M6 10 V21 M6 16 Q6 15 12 15 Q13 15 13.5 12" fill="none" stroke="#333" stroke-width="2.2"/><circle cx="6" cy="21" r="2.3" fill="#333"/><circle cx="13.5" cy="12" r="2.2" fill="#333"/><g stroke="#333" stroke-width="2.2"><path d="M13 3 H25.5 M17 9 H25.5 M17 15.5 H25.5 M13 21.5 H25.5"/></g></svg>
<svg style="position:absolute;left:15px;top:104px;" width="24" height="26" viewBox="0 0 24 26"><g fill="#333"><rect x="2" y="1" width="2.4" height="3"/><rect x="2" y="6" width="2.4" height="3"/><circle cx="3.2" cy="14" r="3.2"/><rect x="2" y="19" width="2.4" height="3"/><rect x="2" y="23.5" width="2.4" height="2.5"/></g><path d="M9 18.5 H19 M14 13.5 V23.5" stroke="#1a4fb8" stroke-width="2.6"/></svg>
<svg style="position:absolute;left:12px;top:150px;" width="26" height="24" viewBox="0 0 26 24"><ellipse cx="13" cy="9" rx="12" ry="8" fill="#333"/><path d="M5 14 L3 22 L12 16 Z" fill="#333"/></svg>
<svg style="position:absolute;left:12px;top:192px;" width="26" height="26" viewBox="0 0 26 26"><circle cx="14" cy="14" r="9" fill="none" stroke="#333" stroke-width="2.2"/><path d="M10 2.5 H18 M14 3 V5" stroke="#333" stroke-width="2"/><path d="M14 14 L18 10" stroke="#333" stroke-width="2"/><path d="M1 11 H6 M0 15 H5 M2 19 H6" stroke="#333" stroke-width="1.6"/></svg>
<div style="position:absolute;left:0px;top:227px;width:49px;height:1px;background:#d6d6d6;"></div>
<svg style="position:absolute;left:13px;top:237px;" width="23" height="25" viewBox="0 0 23 25"><rect x="1.2" y="1.2" width="20" height="22" rx="2" fill="none" stroke="#333" stroke-width="2"/><g stroke="#333" stroke-width="1.7" fill="none"><path d="M4.5 6.5 L6.5 8.5 L9 5"/><path d="M4.5 12 L6.5 14 L9 10.5"/><path d="M4.5 17.5 L6.5 19.5 L9 16"/><path d="M11 7.5 H18 M11 13 H18 M11 18.5 H18"/></g></svg>
<svg style="position:absolute;left:59px;top:61px;" width="26" height="25" viewBox="0 0 26 25"><path d="M10 3 L2 11 L10 19 Z" fill="#333"/><path d="M9 11 H14 Q21 11 21 18 Q21 21 19.5 23" fill="none" stroke="#333" stroke-width="4.2"/></svg>
<svg style="position:absolute;left:103px;top:61px;" width="26" height="25" viewBox="0 0 26 25"><path d="M16 3 L24 11 L16 19 Z" fill="#999"/><path d="M17 11 H12 Q5 11 5 18 Q5 21 6.5 23" fill="none" stroke="#999" stroke-width="4.2"/></svg>
<div style="position:absolute;left:138px;top:57px;width:2px;height:33px;background:#d0d0d0;"></div>
<svg style="position:absolute;left:150px;top:61px;" width="25" height="25" viewBox="0 0 25 25"><path d="M1.2 1.2 H19.7 L23.7 5.2 V23.7 H5.2 L1.2 19.7 Z" fill="#fff" stroke="#555" stroke-width="1.3" stroke-linejoin="round"/><path d="M1.2 1.2 L5.2 5.2 H23.7 M5.2 5.2 V23.7" fill="none" stroke="#555" stroke-width="0.9"/><path d="M9.2 9.2 H19.7 L23.2 12.5 H12.7 Z M9.2 9.2 L12.7 12.5 V23.7 L9.2 20.2 Z" fill="#999" stroke="#555" stroke-width="0.9" stroke-linejoin="round"/><rect x="12.7" y="12.5" width="11" height="11.2" fill="#9a9a9a" stroke="#555" stroke-width="1"/></svg>
<svg style="position:absolute;left:194px;top:61px;" width="26" height="26" viewBox="0 0 26 26"><circle cx="12" cy="13" r="10.8" fill="#a0a0a0" stroke="#333" stroke-width="1.1"/><path d="M11.5 13 L25 4 V22 Z" fill="#fff"/><circle cx="11.5" cy="13" r="3.8" fill="#fff" stroke="#333" stroke-width="1.1"/><path d="M11.5 9.2 L16 8.5 M11.5 16.8 L16 17.5" stroke="#fff" stroke-width="3"/><ellipse cx="17" cy="7.8" rx="2.3" ry="3.6" transform="rotate(45 17 7.8)" fill="#fff" stroke="#333" stroke-width="1.1"/><ellipse cx="17" cy="18.2" rx="2.3" ry="3.6" transform="rotate(-45 17 18.2)" fill="#fff" stroke="#333" stroke-width="1.1"/><path d="M1.5 13 H24" stroke="#555" stroke-width="1.1" stroke-dasharray="2 3"/></svg>
<div style="position:absolute;left:228px;top:57px;width:2px;height:33px;background:#d0d0d0;"></div>
<svg style="position:absolute;left:240px;top:61px;" width="26" height="26" viewBox="0 0 26 26"><path d="M4.5 21.5 L21.5 4.5" stroke="#333" stroke-width="1.7"/><circle cx="4" cy="22" r="2.3" fill="#fff" stroke="#1a56c4" stroke-width="1.3"/><circle cx="22" cy="4" r="2.3" fill="#fff" stroke="#1a56c4" stroke-width="1.3"/></svg>
<svg style="position:absolute;left:278px;top:69px;" width="13" height="8" viewBox="0 0 13 8"><path d="M1.2 1.2 L6.5 6.5 L11.8 1.2" fill="none" stroke="#333" stroke-width="2.4"/></svg>
<svg style="position:absolute;left:306px;top:59.5px;" width="26" height="24" viewBox="0 0 26 24"><rect x="2" y="6" width="20" height="16" fill="none" stroke="#333" stroke-width="1.8"/><circle cx="12" cy="14" r="2.2" fill="none" stroke="#1a56c4" stroke-width="1.3"/><circle cx="22" cy="4" r="2.3" fill="#fff" stroke="#1a56c4" stroke-width="1.3"/></svg>
<svg style="position:absolute;left:343px;top:69px;" width="13" height="8" viewBox="0 0 13 8"><path d="M1.2 1.2 L6.5 6.5 L11.8 1.2" fill="none" stroke="#333" stroke-width="2.4"/></svg>
<svg style="position:absolute;left:370px;top:61px;" width="26" height="26" viewBox="0 0 26 26"><circle cx="12" cy="13" r="10.8" fill="none" stroke="#333" stroke-width="1.6"/><circle cx="12" cy="13" r="2" fill="none" stroke="#1a56c4" stroke-width="1.3"/><circle cx="19.5" cy="5" r="2" fill="#fff" stroke="#1a56c4" stroke-width="1.3"/></svg>
<svg style="position:absolute;left:408px;top:69px;" width="13" height="8" viewBox="0 0 13 8"><path d="M1.2 1.2 L6.5 6.5 L11.8 1.2" fill="none" stroke="#333" stroke-width="2.4"/></svg>
<svg style="position:absolute;left:436px;top:61px;" width="26" height="26" viewBox="0 0 26 26"><path d="M3 21 Q5 8 17 6.5" fill="none" stroke="#333" stroke-width="1.7"/><circle cx="3" cy="21.5" r="2" fill="#fff" stroke="#1a56c4" stroke-width="1.3"/><circle cx="18" cy="6" r="2" fill="#fff" stroke="#1a56c4" stroke-width="1.3"/><circle cx="18" cy="21.5" r="2" fill="#fff" stroke="#1a56c4" stroke-width="1.3"/></svg>
<svg style="position:absolute;left:473px;top:69px;" width="13" height="8" viewBox="0 0 13 8"><path d="M1.2 1.2 L6.5 6.5 L11.8 1.2" fill="none" stroke="#333" stroke-width="2.4"/></svg>
<svg style="position:absolute;left:500px;top:61px;" width="25" height="25" viewBox="0 0 25 25"><path d="M12 1.5 L22.5 9.5 L19 22 H5 L1.5 9.5 Z" fill="none" stroke="#333" stroke-width="1.6"/><circle cx="12" cy="13" r="9" fill="none" stroke="#1a56c4" stroke-width="1.1"/><circle cx="12" cy="13" r="2" fill="none" stroke="#1a56c4" stroke-width="1.2"/><circle cx="18" cy="6.5" r="2" fill="#fff" stroke="#1a56c4" stroke-width="1.2"/></svg>
<svg style="position:absolute;left:538px;top:69px;" width="13" height="8" viewBox="0 0 13 8"><path d="M1.2 1.2 L6.5 6.5 L11.8 1.2" fill="none" stroke="#333" stroke-width="2.4"/></svg>
<svg style="position:absolute;left:564px;top:61px;" width="27" height="26" viewBox="0 0 27 26"><path d="M3 22 Q4 16 11 14 Q17 12 20 5" fill="none" stroke="#333" stroke-width="1.6"/><circle cx="3" cy="22" r="2" fill="#fff" stroke="#1a56c4" stroke-width="1.3"/><circle cx="11" cy="14" r="2" fill="#fff" stroke="#1a56c4" stroke-width="1.3"/><circle cx="21" cy="4" r="2" fill="#fff" stroke="#1a56c4" stroke-width="1.3"/></svg>
<svg style="position:absolute;left:603px;top:69px;" width="13" height="8" viewBox="0 0 13 8"><path d="M1.2 1.2 L6.5 6.5 L11.8 1.2" fill="none" stroke="#333" stroke-width="2.4"/></svg>
<svg style="position:absolute;left:636px;top:67px;" width="13" height="13" viewBox="0 0 13 13"><circle cx="6.5" cy="6.5" r="4.2" fill="none" stroke="#1a56c4" stroke-width="1.6"/></svg>
<svg style="position:absolute;left:672px;top:61px;" width="28" height="26" viewBox="0 0 28 26"><rect x="2" y="4" width="20.5" height="19" fill="none" stroke="#888" stroke-width="1" stroke-dasharray="2 1.5"/><path d="M6.5 20.5 L13.7 4 L21 20.5" fill="none" stroke="#333" stroke-width="4.4" stroke-linejoin="round" stroke-linecap="round"/><path d="M6.5 20.5 L13.7 4 L21 20.5" fill="none" stroke="#fff" stroke-width="1.8" stroke-linejoin="round" stroke-linecap="round"/><path d="M10 15 H17.5" stroke="#333" stroke-width="4"/><path d="M10.5 15 H17" stroke="#fff" stroke-width="1.4"/><circle cx="3" cy="22.5" r="2" fill="#fff" stroke="#1a56c4" stroke-width="1.3"/><circle cx="24.5" cy="3" r="2" fill="#fff" stroke="#1a56c4" stroke-width="1.3"/></svg>
<svg style="position:absolute;left:716px;top:62px;" width="24" height="23" viewBox="0 0 24 23"><path d="M1 3 L3 1 H19 L21 3 V20 H3 L1 18 Z" fill="none" stroke="#555" stroke-width="1.5"/><path d="M1 3 H19 L21 1 M19 3 V20" fill="none" stroke="#555" stroke-width="1"/><path d="M5 3.5 V20" stroke="#1a56c4" stroke-width="2"/></svg>
<svg style="position:absolute;left:753px;top:69px;" width="13" height="8" viewBox="0 0 13 8"><path d="M1.2 1.2 L6.5 6.5 L11.8 1.2" fill="none" stroke="#333" stroke-width="2.4"/></svg>
<svg style="position:absolute;left:781px;top:61px;" width="24" height="26" viewBox="0 0 24 26"><path d="M3 4 V23" stroke="#1a56c4" stroke-width="2.4"/><path d="M8 7.5 H17 M8 7.5 L11 5 M8 7.5 L11 10" stroke="#333" stroke-width="1.6" fill="none"/><path d="M7 14.5 H16 M16 14.5 L13 12 M16 14.5 L13 17" stroke="#1a56c4" stroke-width="1.6" fill="none"/><path d="M20.5 4 V22" stroke="#333" stroke-width="2.4" stroke-dasharray="3 3"/></svg>
<div style="position:absolute;left:815px;top:57px;width:2px;height:33px;background:#d0d0d0;"></div>
<svg style="position:absolute;left:828px;top:61px;" width="26" height="26" viewBox="0 0 26 26"><path d="M3 8 V4 H10" stroke="#999" stroke-width="1" fill="none" stroke-dasharray="1.5 1"/><path d="M3 24 Q3 5 21 5" fill="none" stroke="#333" stroke-width="2"/><path d="M3 20 V24" stroke="#1a56c4" stroke-width="2"/><path d="M17 5 H22" stroke="#1a56c4" stroke-width="1.6"/></svg>
<svg style="position:absolute;left:871px;top:62px;" width="23" height="23" viewBox="0 0 23 23"><g stroke="#333" stroke-width="2.6" fill="none"><path d="M4.5 4 L19 19"/><path d="M19 4 L4.5 19"/><circle cx="4" cy="4" r="2.8"/><circle cx="4" cy="19" r="2.8"/></g><path d="M14 9 L20 2 M14 14 L20 21" stroke="#333" stroke-width="3.2"/></svg>
<svg style="position:absolute;left:908px;top:69px;" width="13" height="8" viewBox="0 0 13 8"><path d="M1.2 1.2 L6.5 6.5 L11.8 1.2" fill="none" stroke="#333" stroke-width="2.4"/></svg>
<svg style="position:absolute;left:937px;top:61px;" width="21" height="23" viewBox="0 0 21 23"><path d="M1.5 22 V8 Q1.5 2 7.5 2 Q13 2 13 8 V10.5 H18.5 V21.5 H14" fill="none" stroke="#333" stroke-width="1.6"/><path d="M4.5 22 V8.5 Q4.5 5 7.5 5 Q10.5 5 10.5 8.5 V13 H16 V19.5 H8.5 V22" fill="none" stroke="#1a56c4" stroke-width="1.6"/></svg>
<svg style="position:absolute;left:973px;top:69px;" width="13" height="8" viewBox="0 0 13 8"><path d="M1.2 1.2 L6.5 6.5 L11.8 1.2" fill="none" stroke="#333" stroke-width="2.4"/></svg>
<svg style="position:absolute;left:1000px;top:62px;" width="26" height="23" viewBox="0 0 26 23"><path d="M2 1.5 V20.5 H10 V14 H7 V1.5 Z" fill="none" stroke="#333" stroke-width="2"/><path d="M12 9 V15 M12 17.5 V20" stroke="#333" stroke-width="1.4"/><path d="M15 20.5 H22.5 V1.5 H19.5 V14 H15 Z" fill="none" stroke="#1a56c4" stroke-width="2"/></svg>
<svg style="position:absolute;left:1044px;top:62px;" width="24" height="23" viewBox="0 0 24 23"><rect x="1.5" y="1.5" width="7.5" height="7" fill="none" stroke="#333" stroke-width="2"/><rect x="13" y="1.5" width="7.5" height="7" fill="none" stroke="#1a56c4" stroke-width="1.8"/><rect x="1.5" y="12.5" width="7.5" height="7" fill="none" stroke="#1a56c4" stroke-width="1.8"/><rect x="13" y="12.5" width="7.5" height="7" fill="none" stroke="#1a56c4" stroke-width="1.8"/></svg>
<svg style="position:absolute;left:1080px;top:69px;" width="13" height="8" viewBox="0 0 13 8"><path d="M1.2 1.2 L6.5 6.5 L11.8 1.2" fill="none" stroke="#333" stroke-width="2.4"/></svg>
<svg style="position:absolute;left:1108px;top:61px;" width="25" height="25" viewBox="0 0 25 25"><path d="M2 2 H14 L21 9 V23 H2 Z" fill="none" stroke="#333" stroke-width="1.7"/><path d="M14 2 V9 H21" fill="none" stroke="#333" stroke-width="1.3"/><path d="M9 3 V11 M5.5 8 L9 12 L12.5 8" stroke="#333" stroke-width="2" fill="none"/><text x="11.5" y="21" font-family="Liberation Sans" font-weight="700" font-size="7.5" fill="#333" text-anchor="middle">DXF</text></svg>
<svg style="position:absolute;left:1145px;top:69px;" width="13" height="8" viewBox="0 0 13 8"><path d="M1.2 1.2 L6.5 6.5 L11.8 1.2" fill="none" stroke="#333" stroke-width="2.4"/></svg>
<div style="position:absolute;left:1165px;top:57px;width:2px;height:33px;background:#d0d0d0;"></div>
<svg style="position:absolute;left:1178px;top:61px;" width="21" height="26" viewBox="0 0 21 26"><path d="M4 20 L17 6" stroke="#333" stroke-width="2.2"/><path d="M2 22 L4.5 14 L10 19.5 Z M19 4 L16.5 12 L11 6.5 Z" fill="#333"/><path d="M2 16 L7 21 M14 4 L19 9" stroke="#333" stroke-width="1"/></svg>
<div style="position:absolute;left:1213px;top:57px;width:2px;height:33px;background:#d0d0d0;"></div>
<svg style="position:absolute;left:1225px;top:61px;" width="24" height="25" viewBox="0 0 24 25"><path d="M1.5 22.5 L21 3" stroke="#1a56c4" stroke-width="1.6"/><path d="M10 12 L21 22.5" stroke="#333" stroke-width="2.6"/><circle cx="10" cy="12" r="2.6" fill="#333"/></svg>
<svg style="position:absolute;left:1269px;top:62px;" width="23" height="23" viewBox="0 0 23 23"><circle cx="11.5" cy="11.5" r="9.8" fill="none" stroke="#1a56c4" stroke-width="1.6"/><circle cx="11.5" cy="11.5" r="5.5" fill="none" stroke="#333" stroke-width="2.4"/></svg>
<svg style="position:absolute;left:1310px;top:61px;" width="24" height="25" viewBox="0 0 24 25"><path d="M2 5.5 L16 19.5" stroke="#333" stroke-width="2.6"/><path d="M7 2 L21 16" stroke="#1a56c4" stroke-width="1.5"/></svg>
<svg style="position:absolute;left:1353px;top:61px;" width="25" height="25" viewBox="0 0 25 25"><path d="M2 22 L21.5 3" stroke="#333" stroke-width="2.6"/><circle cx="15.5" cy="16.5" r="6" fill="none" stroke="#1a56c4" stroke-width="1.6"/></svg>
<div style="position:absolute;left:1397px;top:72px;width:21px;height:3px;background:#333;"></div>
<div style="position:absolute;left:1449px;top:63px;width:3px;height:21px;background:#333;"></div>
<svg style="position:absolute;left:1480px;top:61px;" width="25" height="26" viewBox="0 0 25 26"><path d="M1 23.5 H23" stroke="#333" stroke-width="2.6"/><path d="M11 2 V23" stroke="#1a56c4" stroke-width="1.5"/><path d="M11 14.5 H18.5 V23" stroke="#333" stroke-width="1.5" fill="none"/></svg>
<div style="position:absolute;left:1529px;top:70px;width:13px;height:2.8px;background:#333;"></div>
<div style="position:absolute;left:1529px;top:76px;width:13px;height:2.8px;background:#333;"></div>
<svg style="position:absolute;left:1565px;top:67px;" width="25" height="14" viewBox="0 0 25 14"><path d="M1 7 H5.5 M17.5 7 H23" stroke="#1a56c4" stroke-width="1.6"/><circle cx="11.5" cy="7" r="3.1" fill="#333"/></svg>
<svg style="position:absolute;left:1609px;top:61px;" width="24" height="25" viewBox="0 0 24 25"><path d="M13 11 L21.5 3" stroke="#333" stroke-width="2.6"/><path d="M1 6 Q10 6 13 23" fill="none" stroke="#1a56c4" stroke-width="1.5"/></svg>
<svg style="position:absolute;left:1651px;top:61px;" width="24" height="25" viewBox="0 0 24 25"><path d="M1.5 2 Q3 15 9 17 Q13 18 16 20" fill="none" stroke="#1a56c4" stroke-width="1.5"/><path d="M9 16 Q13 10 14 7 Q16 3 19 2" fill="none" stroke="#333" stroke-width="2.4"/><circle cx="8.5" cy="16" r="2.3" fill="#333"/></svg>
<svg style="position:absolute;left:1692px;top:61px;" width="27" height="26" viewBox="0 0 27 26"><path d="M12 2.5 H2 L7.5 12.5 L2 22.5 H12" fill="none" stroke="#333" stroke-width="2.4"/><path d="M13.5 1 V24" stroke="#333" stroke-width="1.3" stroke-dasharray="5 2 2 2"/><path d="M15.5 2.5 H25 L19.5 12.5 L25 22.5 H15.5" fill="none" stroke="#1a56c4" stroke-width="1.6"/></svg>
<svg style="position:absolute;left:1736px;top:69px;" width="23" height="11" viewBox="0 0 23 11"><path d="M1 2.5 H21.5" stroke="#1a56c4" stroke-width="2.6"/><path d="M1.5 9.5 L4.5 4 M6.5 9.5 L9.5 4 M11.5 9.5 L14.5 4 M16.5 9.5 L19.5 4" stroke="#333" stroke-width="1.3"/></svg>
<svg style="position:absolute;left:1778px;top:61px;" width="26" height="26" viewBox="0 0 26 26"><path d="M3 23 Q5 7 13 7 Q21 7 23 23" fill="none" stroke="#333" stroke-width="2.4"/><path d="M3 23 Q5 7 13 7" fill="none" stroke="#1a56c4" stroke-width="2.4"/><g stroke="#555" stroke-width="1"><path d="M13 7 V1 M8.5 8.2 L6 3 M17.5 8.2 L20 3 M5.5 11 L1.5 7 M20.5 11 L24.5 7 M4 15 L0 13 M22 15 L26 13 M3.2 19 L0 18.5 M22.8 19 L26 18.5"/></g></svg>
<div style="position:absolute;left:1825px;top:53px;width:221px;height:41px;background:#ececec;border-radius:5px;"></div>
<div class="t" style="left:1838.0px;top:66.9px;font-size:16.3px;color:#444;">Search tools...</div>
<div style="position:absolute;left:1951px;top:64px;width:27px;height:21px;background:#f2f2f2;border:1px solid #b5b5b5;border-radius:2px;"></div>
<div class="t" style="left:1965.0px;top:68.7px;font-size:15px;color:#444;transform:translateX(-50%);">ctrl</div>
<div style="position:absolute;left:1980px;top:64px;width:31px;height:21px;background:#f2f2f2;border:1px solid #b5b5b5;border-radius:2px;"></div>
<div class="t" style="left:1996.0px;top:68.7px;font-size:15px;color:#444;transform:translateX(-50%);">shift</div>
<div style="position:absolute;left:2013px;top:64px;width:20px;height:21px;background:#f2f2f2;border:1px solid #b5b5b5;border-radius:2px;"></div>
<div class="t" style="left:2023.5px;top:68.7px;font-size:15px;color:#444;transform:translateX(-50%);">p</div>
<div style="position:absolute;left:50px;top:97px;width:257px;height:1159px;background:#fff;"></div>
<div style="position:absolute;left:306px;top:97px;width:1.5px;height:548px;background:#d0d0d0;"></div>
<div style="position:absolute;left:306px;top:686px;width:1.5px;height:570px;background:#d0d0d0;"></div>
<div style="position:absolute;left:306px;top:644px;width:41px;height:42px;background:#fff;border:1px solid #9a9a9a;border-left:none;"></div>
<svg style="position:absolute;left:313px;top:654px;" width="28" height="26" viewBox="0 0 28 26"><path d="M2.5 3 L6 6.5 L9.5 3" fill="none" stroke="#333" stroke-width="1.5"/><path d="M6.5 9 V24" stroke="#777" stroke-width="1.6"/><path d="M10 4 H25 M9 10 H25 M9 16 H25 M9 22 H25" stroke="#555" stroke-width="1.3"/></svg>
<svg style="position:absolute;left:61px;top:113px;" width="24" height="26" viewBox="0 0 24 26"><path d="M1.5 2 H21 L13.5 11 V22 L10 19.5 V11 Z" fill="none" stroke="#333" stroke-width="1.6" stroke-linejoin="round"/></svg>
<div style="position:absolute;left:99px;top:106px;width:195px;height:35px;border:1px solid #b0b0b0;border-radius:5px;background:#fff;"></div>
<div class="t" style="left:107.5px;top:118.9px;font-size:16px;color:#888;font-style:italic;">Filter by name or type</div>
<div class="t" style="left:55.5px;top:155.1px;font-size:16px;color:#2f2f2f;font-weight:700;">Features (34)</div>
<svg style="position:absolute;left:219px;top:152px;" width="26" height="22" viewBox="0 0 26 22"><path d="M1.5 3.5 V1.5 H9 L11 4.5 H23 V19.5 H1.5 V16" fill="none" stroke="#999" stroke-width="1.3"/><path d="M7 8 V16 M3 12 H11" stroke="#6a9ee0" stroke-width="2.2"/></svg>
<svg style="position:absolute;left:255px;top:150px;" width="27" height="26" viewBox="0 0 27 26"><circle cx="13.5" cy="14.5" r="9.5" fill="none" stroke="#2f2f2f" stroke-width="2.4"/><path d="M9.5 2 H17.5 M13.5 2 V5" stroke="#2f2f2f" stroke-width="2"/><path d="M20.5 5 L22.5 7" stroke="#2f2f2f" stroke-width="2"/><path d="M12 12 L16.5 17" stroke="#2f2f2f" stroke-width="1.6"/></svg>
<div style="position:absolute;left:50px;top:181px;width:229px;height:632px;overflow:hidden;">
<div style="position:absolute;left:0;top:408px;width:229px;height:29px;background:#eceef2;"></div>
<div style="position:absolute;left:0;top:437px;width:229px;height:1px;background:#84c5ee;"></div>
<div style="position:absolute;left:0;top:440px;width:229px;height:29.5px;background:#b3dcf3;"></div>
<div style="position:absolute;left:11.5px;top:0px;width:1.5px;height:210px;background:#cfcfcf;"></div>
<div style="position:absolute;left:5.5px;top:210px;width:12px;height:1.5px;background:#cfcfcf;"></div>
<div style="position:absolute;left:11.5px;top:243px;width:1.5px;height:162px;background:#cfcfcf;"></div>
<div style="position:absolute;left:5.5px;top:405px;width:12px;height:1.5px;background:#cfcfcf;"></div>
<div style="position:absolute;left:11.5px;top:441px;width:1.5px;height:159px;background:#cfcfcf;"></div>
<div style="position:absolute;left:5.5px;top:600px;width:12px;height:1.5px;background:#cfcfcf;"></div>
<svg style="position:absolute;left:31.3px;top:-9.700000000000012px" width="21" height="21" viewBox="0 0 21 21"><path d="M0.5 0.5 H15.5 L18.5 3.5 V18.8 H3.2 L0.5 15.8 Z" fill="#fff" stroke="#505050" stroke-width="1.1" stroke-linejoin="round"/><path d="M0.5 0.5 L3.2 3.2 H18.5 M3.2 3.2 V18.8" fill="none" stroke="#505050" stroke-width="0.8"/><path d="M6.2 6.8 H15.6 L18.3 9.3 H8.7 Z" fill="#959595" stroke="#505050" stroke-width="0.8"/><path d="M6.2 6.8 L8.7 9.3 V18.8 L6.2 15.8 Z" fill="#959595" stroke="#505050" stroke-width="0.8"/><rect x="8.7" y="9.3" width="9.8" height="9.5" fill="#a8a8a8" stroke="#505050" stroke-width="0.9"/></svg>
<div class="t" style="left:57.0px;top:-7.4px;font-size:16px;color:#333;">2x2 Extrude</div>
<svg style="position:absolute;left:31.3px;top:22.79999999999999px" width="21" height="21" viewBox="0 0 21 21"><path d="M0.5 0.5 H15.5 L18.5 3.5 V18.8 H3.2 L0.5 15.8 Z" fill="#fff" stroke="#505050" stroke-width="1.1" stroke-linejoin="round"/><path d="M0.5 0.5 L3.2 3.2 H18.5 M3.2 3.2 V18.8" fill="none" stroke="#505050" stroke-width="0.8"/><path d="M6.2 6.8 H15.6 L18.3 9.3 H8.7 Z" fill="#959595" stroke="#505050" stroke-width="0.8"/><path d="M6.2 6.8 L8.7 9.3 V18.8 L6.2 15.8 Z" fill="#959595" stroke="#505050" stroke-width="0.8"/><rect x="8.7" y="9.3" width="9.8" height="9.5" fill="#a8a8a8" stroke="#505050" stroke-width="0.9"/></svg>
<div class="t" style="left:57.0px;top:25.1px;font-size:16px;color:#333;">1.5x1.5 Extrude</div>
<svg style="position:absolute;left:31px;top:55.19999999999999px" width="22" height="22" viewBox="0 0 22 22"><path d="M0.6 0.5 H10.5 L19.5 4.5 V20.2 H10.2 L0.6 16 Z" fill="#fff" stroke="#444" stroke-width="1.2" stroke-linejoin="round"/><path d="M10.5 0.5 L19.5 4.5 M0.6 0.5 L10.2 4.5 H19.5 M10.2 4.5 V20.2" fill="none" stroke="#444" stroke-width="0.9"/><path d="M10.2 4.5 H19.5 V20.2 H10.2 Z" fill="#9a9a9a"/><path d="M12 6.5 H18 V18.5 H12 Z" fill="#bcbcbc"/><path d="M12 18.5 L18 6.5 H12 Z" fill="#888"/><path d="M10.2 4.5 V20.2 M19.5 4.5 V20.2" stroke="#444" stroke-width="1.1"/><g fill="#555"><ellipse cx="3.3" cy="5.2" rx="1.3" ry="1.7"/><ellipse cx="7.3" cy="6.9" rx="1.3" ry="1.7"/><ellipse cx="3.3" cy="11.2" rx="1.3" ry="1.7"/><ellipse cx="7.3" cy="12.9" rx="1.3" ry="1.7"/></g></svg>
<div class="t" style="left:57.0px;top:57.6px;font-size:16px;color:#333;">Convert Tub...</div>
<svg style="position:absolute;left:30px;top:87.19999999999999px" width="21" height="21" viewBox="0 0 21 21"><path d="M4 16 L15.5 3 L18.5 5.5 L7 18.5 L3 19.5 Z" fill="#fff" stroke="#aaa" stroke-width="1.2" stroke-linejoin="round"/><path d="M13.5 5.2 L16.5 7.8" stroke="#aaa" stroke-width="1"/><path d="M1 20 H20" stroke="#5a8ee0" stroke-width="1.3"/></svg>
<div class="t" style="left:57.0px;top:90.1px;font-size:16px;color:#a8a8a8;">Inner Tube Holes</div>
<svg style="position:absolute;left:31.3px;top:120.29999999999998px" width="21" height="21" viewBox="0 0 21 21"><path d="M0.5 0.5 H15.5 L18.5 3.5 V18.8 H3.2 L0.5 15.8 Z" fill="#fff" stroke="#505050" stroke-width="1.1" stroke-linejoin="round"/><path d="M0.5 0.5 L3.2 3.2 H18.5 M3.2 3.2 V18.8" fill="none" stroke="#505050" stroke-width="0.8"/><path d="M6.2 6.8 H15.6 L18.3 9.3 H8.7 Z" fill="#959595" stroke="#505050" stroke-width="0.8"/><path d="M6.2 6.8 L8.7 9.3 V18.8 L6.2 15.8 Z" fill="#959595" stroke="#505050" stroke-width="0.8"/><rect x="8.7" y="9.3" width="9.8" height="9.5" fill="#a8a8a8" stroke="#505050" stroke-width="0.9"/></svg>
<div class="t" style="left:57.0px;top:122.6px;font-size:16px;color:#333;">Inner Tube Holes</div>
<svg style="position:absolute;left:30px;top:152.2px" width="21" height="21" viewBox="0 0 21 21"><path d="M4 16 L15.5 3 L18.5 5.5 L7 18.5 L3 19.5 Z" fill="#fff" stroke="#aaa" stroke-width="1.2" stroke-linejoin="round"/><path d="M13.5 5.2 L16.5 7.8" stroke="#aaa" stroke-width="1"/><path d="M1 20 H20" stroke="#5a8ee0" stroke-width="1.3"/></svg>
<div class="t" style="left:57.0px;top:155.1px;font-size:16px;color:#a8a8a8;">Outer Tube Holes</div>
<svg style="position:absolute;left:31.3px;top:185.29999999999998px" width="21" height="21" viewBox="0 0 21 21"><path d="M0.5 0.5 H15.5 L18.5 3.5 V18.8 H3.2 L0.5 15.8 Z" fill="#fff" stroke="#505050" stroke-width="1.1" stroke-linejoin="round"/><path d="M0.5 0.5 L3.2 3.2 H18.5 M3.2 3.2 V18.8" fill="none" stroke="#505050" stroke-width="0.8"/><path d="M6.2 6.8 H15.6 L18.3 9.3 H8.7 Z" fill="#959595" stroke="#505050" stroke-width="0.8"/><path d="M6.2 6.8 L8.7 9.3 V18.8 L6.2 15.8 Z" fill="#959595" stroke="#505050" stroke-width="0.8"/><rect x="8.7" y="9.3" width="9.8" height="9.5" fill="#a8a8a8" stroke="#505050" stroke-width="0.9"/></svg>
<div class="t" style="left:57.0px;top:187.6px;font-size:16px;color:#333;">Outer Tube Holes</div>
<svg style="position:absolute;left:30px;top:249.7px" width="21" height="21" viewBox="0 0 21 21"><path d="M4 16 L15.5 3 L18.5 5.5 L7 18.5 L3 19.5 Z" fill="#fff" stroke="#555" stroke-width="1.2" stroke-linejoin="round"/><path d="M13.5 5.2 L16.5 7.8" stroke="#555" stroke-width="1"/><path d="M1 20 H20" stroke="#5a8ee0" stroke-width="1.3"/></svg>
<div class="t" style="left:57.0px;top:252.6px;font-size:16px;color:#333;">Crush Block</div>
<svg style="position:absolute;left:31.3px;top:282.8px" width="21" height="21" viewBox="0 0 21 21"><path d="M0.5 0.5 H15.5 L18.5 3.5 V18.8 H3.2 L0.5 15.8 Z" fill="#fff" stroke="#505050" stroke-width="1.1" stroke-linejoin="round"/><path d="M0.5 0.5 L3.2 3.2 H18.5 M3.2 3.2 V18.8" fill="none" stroke="#505050" stroke-width="0.8"/><path d="M6.2 6.8 H15.6 L18.3 9.3 H8.7 Z" fill="#959595" stroke="#505050" stroke-width="0.8"/><path d="M6.2 6.8 L8.7 9.3 V18.8 L6.2 15.8 Z" fill="#959595" stroke="#505050" stroke-width="0.8"/><rect x="8.7" y="9.3" width="9.8" height="9.5" fill="#a8a8a8" stroke="#505050" stroke-width="0.9"/></svg>
<div class="t" style="left:57.0px;top:285.1px;font-size:16px;color:#333;">Crush Block Extrude</div>
<svg style="position:absolute;left:31.3px;top:315.3px" width="21" height="21" viewBox="0 0 21 21"><path d="M0.5 0.5 H15.5 L18.5 3.5 V18.8 H3.2 L0.5 15.8 Z" fill="#fff" stroke="#505050" stroke-width="1.1" stroke-linejoin="round"/><path d="M0.5 0.5 L3.2 3.2 H18.5 M3.2 3.2 V18.8" fill="none" stroke="#505050" stroke-width="0.8"/><path d="M6.2 6.8 H15.6 L18.3 9.3 H8.7 Z" fill="#959595" stroke="#505050" stroke-width="0.8"/><path d="M6.2 6.8 L8.7 9.3 V18.8 L6.2 15.8 Z" fill="#959595" stroke="#505050" stroke-width="0.8"/><rect x="8.7" y="9.3" width="9.8" height="9.5" fill="#a8a8a8" stroke="#505050" stroke-width="0.9"/></svg>
<div class="t" style="left:57.0px;top:317.6px;font-size:16px;color:#333;">Crush Block Flange</div>
<svg style="position:absolute;left:31px;top:347.50000000000006px" width="21" height="21" viewBox="0 0 21 21"><path d="M0.5 16 L3.2 18.6 H18.8 V3.5 L15.8 0.5 H7 Q1 0.8 0.5 7 Z" fill="#fff" stroke="#505050" stroke-width="1.15" stroke-linejoin="round"/><path d="M7 0.5 Q1 0.8 0.5 7 L3.5 9.8 Q4.5 4 10.5 3.5 Z" fill="#a9a9a9" stroke="#505050" stroke-width="0.8"/><path d="M10.5 3.5 H18.8 M3.5 9.8 V18.6" fill="none" stroke="#707070" stroke-width="0.8"/></svg>
<div class="t" style="left:57.0px;top:350.1px;font-size:16px;color:#333;">Fillet 1</div>
<svg style="position:absolute;left:31px;top:380.00000000000006px" width="21" height="21" viewBox="0 0 21 21"><path d="M0.5 16 L3.2 18.6 H18.8 V3.5 L15.8 0.5 H7 L0.5 7 Z" fill="#fff" stroke="#505050" stroke-width="1.15" stroke-linejoin="round"/><path d="M7 0.5 L0.5 7 L3.5 9.8 L10.5 3.5 Z" fill="#a9a9a9" stroke="#505050" stroke-width="0.8"/><path d="M10.5 3.5 H18.8 M3.5 9.8 V18.6" fill="none" stroke="#707070" stroke-width="0.8"/></svg>
<div class="t" style="left:57.0px;top:382.6px;font-size:16px;color:#333;">Chamfer 2</div>
<svg style="position:absolute;left:31.3px;top:510.30000000000007px" width="21" height="21" viewBox="0 0 21 21"><path d="M0.5 0.5 H15.5 L18.5 3.5 V18.8 H3.2 L0.5 15.8 Z" fill="#fff" stroke="#b0b0b0" stroke-width="1.1" stroke-linejoin="round"/><path d="M0.5 0.5 L3.2 3.2 H18.5 M3.2 3.2 V18.8" fill="none" stroke="#b0b0b0" stroke-width="0.8"/><path d="M6.2 6.8 H15.6 L18.3 9.3 H8.7 Z" fill="#c4c4c4" stroke="#b0b0b0" stroke-width="0.8"/><path d="M6.2 6.8 L8.7 9.3 V18.8 L6.2 15.8 Z" fill="#c4c4c4" stroke="#b0b0b0" stroke-width="0.8"/><rect x="8.7" y="9.3" width="9.8" height="9.5" fill="#cdcdcd" stroke="#b0b0b0" stroke-width="0.9"/></svg>
<div class="t" style="left:57.0px;top:512.6px;font-size:16px;color:#a0a0a0;font-style:italic;">Hook Extrude</div>
<svg style="position:absolute;left:31.3px;top:542.8000000000001px" width="21" height="21" viewBox="0 0 21 21"><path d="M0.5 0.5 H15.5 L18.5 3.5 V18.8 H3.2 L0.5 15.8 Z" fill="#fff" stroke="#b0b0b0" stroke-width="1.1" stroke-linejoin="round"/><path d="M0.5 0.5 L3.2 3.2 H18.5 M3.2 3.2 V18.8" fill="none" stroke="#b0b0b0" stroke-width="0.8"/><path d="M6.2 6.8 H15.6 L18.3 9.3 H8.7 Z" fill="#c4c4c4" stroke="#b0b0b0" stroke-width="0.8"/><path d="M6.2 6.8 L8.7 9.3 V18.8 L6.2 15.8 Z" fill="#c4c4c4" stroke="#b0b0b0" stroke-width="0.8"/><rect x="8.7" y="9.3" width="9.8" height="9.5" fill="#cdcdcd" stroke="#b0b0b0" stroke-width="0.9"/></svg>
<div class="t" style="left:57.0px;top:545.1px;font-size:16px;color:#a0a0a0;font-style:italic;">Bolt Hole Extrude</div>
<svg style="position:absolute;left:30px;top:574.7px" width="21" height="21" viewBox="0 0 21 21"><path d="M2 18 L9 3 Q13 1 17 4 L14 19" fill="none" stroke="#999" stroke-width="1.3"/><ellipse cx="13" cy="5" rx="3" ry="2" fill="none" stroke="#bbb" stroke-width="1"/></svg>
<div class="t" style="left:57.0px;top:577.6px;font-size:16px;color:#a0a0a0;font-style:italic;">?</div>
<svg style="position:absolute;left:176px;top:52px" width="8" height="24" viewBox="0 0 8 24"><g fill="#333"><rect x="3" y="0" width="2" height="3"/><rect x="3" y="5" width="2" height="3"/><circle cx="4" cy="12" r="3.5"/><rect x="3" y="16.5" width="2" height="3"/><rect x="3" y="21" width="2" height="3"/></g></svg>
<svg style="position:absolute;left:176px;top:572px" width="8" height="24" viewBox="0 0 8 24"><g fill="#333"><rect x="3" y="0" width="2" height="3"/><rect x="3" y="5" width="2" height="3"/><circle cx="4" cy="12" r="3.5"/><rect x="3" y="16.5" width="2" height="3"/><rect x="3" y="21" width="2" height="3"/></g></svg>
<svg style="position:absolute;left:5px;top:223.7px" width="16" height="10" viewBox="0 0 16 10"><path d="M1.5 1.5 L8 8 L14.5 1.5" fill="none" stroke="#444" stroke-width="2.4"/></svg>
<svg style="position:absolute;left:31px;top:216.7px" width="22" height="19" viewBox="0 0 22 19"><path d="M1 1.5 H8 L10 4 H20.5 V17.5 H1 Z" fill="#fff" stroke="#555" stroke-width="1.2"/></svg>
<div class="t" style="left:58.0px;top:220.1px;font-size:16px;color:#333;">Crush Block (5)</div>
<svg style="position:absolute;left:5px;top:418.70000000000005px" width="16" height="10" viewBox="0 0 16 10"><path d="M1.5 1.5 L8 8 L14.5 1.5" fill="none" stroke="#444" stroke-width="2.4"/></svg>
<svg style="position:absolute;left:31px;top:411.70000000000005px" width="22" height="19" viewBox="0 0 22 19"><path d="M1 1.5 H8 L10 4 H20.5 V17.5 H1 Z" fill="#fff" stroke="#555" stroke-width="1.2"/></svg>
<div class="t" style="left:58.0px;top:415.1px;font-size:16px;color:#333;">Hooks (4)</div>
<svg style="position:absolute;left:30px;top:444.70000000000005px" width="21" height="21" viewBox="0 0 21 21"><path d="M4 16 L15.5 3 L18.5 5.5 L7 18.5 L3 19.5 Z" fill="#fff" stroke="#555" stroke-width="1.2" stroke-linejoin="round"/><path d="M13.5 5.2 L16.5 7.8" stroke="#555" stroke-width="1"/><path d="M1 20 H20" stroke="#5a8ee0" stroke-width="1.3"/></svg>
<div class="t" style="left:57.0px;top:447.6px;font-size:16px;color:#5f6e7b;font-weight:700;">Hook Sketch</div>
<div style="position:absolute;left:30px;top:483px;width:193px;height:8.5px;background:#b0b0b0;"></div>
<svg style="position:absolute;left:8px;top:609.7px" width="10" height="16" viewBox="0 0 10 16"><path d="M1.5 1.5 L8 8 L1.5 14.5" fill="none" stroke="#444" stroke-width="2.4"/></svg>
<svg style="position:absolute;left:31px;top:606.7px" width="22" height="19" viewBox="0 0 22 19"><path d="M1 1.5 H8 L10 4 H20.5 V17.5 H1 Z" fill="#fff" stroke="#888" stroke-width="1.2"/></svg>
<div class="t" style="left:58.0px;top:610.1px;font-size:16px;color:#a0a0a0;font-style:italic;">Hook Crush Block (2)</div>
</div>
<div style="position:absolute;left:279px;top:181px;width:21px;height:632px;background:#f0f0f0;"></div>
<div style="position:absolute;left:281px;top:369px;width:17px;height:383px;background:#bdbdbd;"></div>
<svg style="position:absolute;left:283px;top:187px;" width="14" height="9" viewBox="0 0 14 9"><path d="M1 8 L7 1.5 L13 8 Z" fill="#333"/></svg>
<svg style="position:absolute;left:283px;top:797px;" width="14" height="9" viewBox="0 0 14 9"><path d="M1 1 L7 7.5 L13 1 Z" fill="#333"/></svg>
<div style="position:absolute;left:50px;top:813px;width:250px;height:2px;background:#dadada;"></div>
<div class="t" style="left:79.0px;top:824.4px;font-size:16px;color:#333;">Parts (4)</div>
<svg style="position:absolute;left:55px;top:826px;" width="16" height="10" viewBox="0 0 16 10"><path d="M1.5 1.5 L8 8 L14.5 1.5" fill="none" stroke="#444" stroke-width="2.4"/></svg>
<svg style="position:absolute;left:81px;top:853.2px" width="21" height="21" viewBox="0 0 21 21"><path d="M0.5 8.5 H8.4 V0.5 H14.8 L18.5 3.8 V18.6 H4 L0.5 14.2 Z" fill="#fff" stroke="#505050" stroke-width="1.15" stroke-linejoin="round"/><path d="M0.5 8.5 L4.2 12.3 V18.6 M4.2 12.3 H13 M8.4 8.5 L13 12.3 M8.4 0.5 L13 3.6 H18.5 M13 3.6 V12.3" fill="none" stroke="#606060" stroke-width="0.9"/></svg>
<div class="t" style="left:106.5px;top:856.1px;font-size:16px;color:#333;">Origin Cube</div>
<svg style="position:absolute;left:81px;top:885.7px" width="21" height="21" viewBox="0 0 21 21"><path d="M0.5 8.5 H8.4 V0.5 H14.8 L18.5 3.8 V18.6 H4 L0.5 14.2 Z" fill="#fff" stroke="#505050" stroke-width="1.15" stroke-linejoin="round"/><path d="M0.5 8.5 L4.2 12.3 V18.6 M4.2 12.3 H13 M8.4 8.5 L13 12.3 M8.4 0.5 L13 3.6 H18.5 M13 3.6 V12.3" fill="none" stroke="#606060" stroke-width="0.9"/></svg>
<div class="t" style="left:106.5px;top:888.6px;font-size:16px;color:#333;">Tube 2&quot;x2&quot;x16&quot;</div>
<svg style="position:absolute;left:81px;top:918.2px" width="21" height="21" viewBox="0 0 21 21"><path d="M0.5 8.5 H8.4 V0.5 H14.8 L18.5 3.8 V18.6 H4 L0.5 14.2 Z" fill="#fff" stroke="#505050" stroke-width="1.15" stroke-linejoin="round"/><path d="M0.5 8.5 L4.2 12.3 V18.6 M4.2 12.3 H13 M8.4 8.5 L13 12.3 M8.4 0.5 L13 3.6 H18.5 M13 3.6 V12.3" fill="none" stroke="#606060" stroke-width="0.9"/></svg>
<div class="t" style="left:106.5px;top:921.1px;font-size:16px;color:#333;">Tube 1.5&quot;x1.5&quot;x18&quot;</div>
<svg style="position:absolute;left:81px;top:950.7px" width="21" height="21" viewBox="0 0 21 21"><path d="M0.5 8.5 H8.4 V0.5 H14.8 L18.5 3.8 V18.6 H4 L0.5 14.2 Z" fill="#fff" stroke="#505050" stroke-width="1.15" stroke-linejoin="round"/><path d="M0.5 8.5 L4.2 12.3 V18.6 M4.2 12.3 H13 M8.4 8.5 L13 12.3 M8.4 0.5 L13 3.6 H18.5 M13 3.6 V12.3" fill="none" stroke="#606060" stroke-width="0.9"/></svg>
<div class="t" style="left:106.5px;top:953.6px;font-size:16px;color:#333;">Crush Block</div>
<div style="position:absolute;left:50px;top:1256px;width:257px;height:1px;background:#cccccc;"></div>
<div style="position:absolute;left:0px;top:1256px;width:2398px;height:36px;background:#d6d6d6;"></div>
<div style="position:absolute;left:0px;top:1256px;width:49px;height:36px;background:#f9f9f9;"></div>
<div style="position:absolute;left:0px;top:1293px;width:2398px;height:1px;background:#303030;"></div>
<svg style="position:absolute;left:0px;top:1280px;" width="14" height="14" viewBox="0 0 14 14"><path d="M0 0 V14 H14 V13.8 Q2 13 0 1 Z" fill="#1d5aa8"/></svg>
<svg style="position:absolute;left:11px;top:1265px;" width="27" height="24" viewBox="0 0 27 24"><rect x="2.2" y="3.8" width="22.6" height="10.5" rx="1.5" fill="#333"/><circle cx="15.5" cy="13.2" r="7" fill="#f9f9f9"/><circle cx="15.5" cy="13.2" r="4.6" fill="none" stroke="#222" stroke-width="2.2"/><path d="M18.8 16.5 L23.5 21.2" stroke="#222" stroke-width="2.6"/></svg>
<svg style="position:absolute;left:60px;top:1265px;" width="21" height="21" viewBox="0 0 21 21"><path d="M10.5 1 V20 M1 10.5 H20" stroke="#666" stroke-width="2.8"/></svg>
<svg style="position:absolute;left:92px;top:1257px" width="216" height="33" viewBox="0 0 216 33"><path d="M0.5 0.5 H41 L53 16.5 L41 32.5 H0.5 Z" fill="#e8e8e8"/><path d="M44 0.5 H201 L213 16.5 L201 32.5 H44 L56 16.5 Z" fill="#fafafa"/></svg>
<svg style="position:absolute;left:103px;top:1260px;" width="25" height="24" viewBox="0 0 25 24"><path d="M1 12 L12 1.5 L17 6 V2.5 H21 V10 L23.5 12.5 H20.5 V23 H14.5 V16 H9.5 V23 H3.5 V12 Z" fill="#666"/></svg>
<div class="t" style="left:162.0px;top:1264.0px;font-size:17.6px;color:#555;">Exercise 4 - Tel</div>
<div style="position:absolute;left:308px;top:1257px;width:251px;height:35px;background:#e9e9e9;border-radius:0 0 7px 7px;"></div>
<svg style="position:absolute;left:323px;top:1263px;" width="20" height="20" viewBox="0 0 20 20"><circle cx="10" cy="10" r="9" fill="#6b9ed8"/><path d="M10 4 V14 M6 10.5 L10 15 L14 10.5" fill="none" stroke="#fff" stroke-width="2.4"/></svg>
<svg style="position:absolute;left:346px;top:1261px;" width="25" height="25" viewBox="0 0 25 25"><path d="M1 4 L4 1 H20 L23 4 V23 H4 L1 20 Z" fill="#fff" stroke="#444" stroke-width="1.2"/><path d="M1 4 H20 L23 1 M20 4 V23" fill="none" stroke="#444" stroke-width="1"/><path d="M4 13 H20 V4 H4 Z" fill="#999"/><path d="M1 4 V13 H20" fill="none" stroke="#444" stroke-width="1"/></svg>
<div class="t" style="left:375.5px;top:1266.9px;font-size:17.3px;color:#555;">Exercise 4 Assembly</div>
<div style="position:absolute;left:561px;top:1257px;width:250px;height:35px;background:#fff;border-radius:0 0 7px 7px;"></div>
<div style="position:absolute;left:562px;top:1289px;width:248px;height:3px;background:#1b4fae;border-radius:2px;"></div>
<svg style="position:absolute;left:575px;top:1261px;" width="24" height="26" viewBox="0 0 24 26"><path d="M1.5 7 L5 5 H9 V23.5 H1.5 Z M9 23.5 L11 21.5 V3 L9 5" fill="#fff" stroke="#444" stroke-width="1.3" stroke-linejoin="round"/><path d="M12 4 L15 1.5 H22 V21 L19.5 23.5 H12 Z M12 4 H19.5 L22 1.5 M19.5 4 V23.5" fill="#fff" stroke="#444" stroke-width="1.3" stroke-linejoin="round"/></svg>
<div class="t" style="left:602.5px;top:1266.9px;font-size:17.3px;color:#333;">Exercise 4 Part Studio</div>
<svg style="position:absolute;left:2274px;top:1228px;" width="24" height="20" viewBox="0 0 24 20"><ellipse cx="15" cy="7" rx="7.5" ry="5" fill="none" stroke="#333" stroke-width="1.6"/><ellipse cx="15" cy="6" rx="3" ry="1.6" fill="#333"/><path d="M1.5 11 H15 M1.5 11 V17 H15 Q22 17 22.5 9" fill="none" stroke="#333" stroke-width="1.6"/><path d="M5 14 V17 M8 14.5 V17 M11 14 V17" stroke="#333" stroke-width="1"/></svg>
<svg style="position:absolute;left:2315px;top:1228px;" width="28" height="20" viewBox="0 0 28 20"><path d="M1.5 17.5 Q1.5 2 14 2 Q26.5 2 26.5 17.5 Z" fill="none" stroke="#333" stroke-width="1.8"/><path d="M7 17.5 Q7 9 14 9 Q21 9 21 17.5" fill="none" stroke="#333" stroke-width="1.6"/><path d="M14 3 V5 M8 5 L9 6.5 M20 5 L19 6.5 M4.5 9 L6 10 M23.5 9 L22 10" stroke="#333" stroke-width="0.9"/></svg>
<svg style="position:absolute;left:2360px;top:1226px;" width="24" height="24" viewBox="0 0 24 24"><path d="M12 1 V19" stroke="#333" stroke-width="1.8"/><path d="M3 4 H21" stroke="#333" stroke-width="1.5"/><path d="M3 4 L0.5 12 H5.5 Z M21 4 L18.5 12 H23.5 Z" fill="none" stroke="#333" stroke-width="1.3"/><path d="M0.5 12 H5.5 M18.5 12 H23.5" stroke="#333" stroke-width="1.6"/><path d="M1 17.5 H23 M1 21.5 H23" stroke="#333" stroke-width="2"/></svg>
<div style="position:absolute;left:319px;top:100px;width:275px;height:270px;background:#fff;box-shadow:0 2px 8px rgba(0,0,0,0.28);"></div>
<div class="t" style="left:327.0px;top:112.2px;font-size:15.2px;color:#2f2f2f;font-weight:700;">Hook Sketch</div>
<div style="position:absolute;left:524px;top:100px;width:35px;height:35px;background:#0a9a0a;"></div>
<svg style="position:absolute;left:528px;top:106px;" width="27" height="22" viewBox="0 0 27 22"><path d="M3 11 L10 18 L24 4" fill="none" stroke="#fff" stroke-width="3.6"/></svg>
<svg style="position:absolute;left:567px;top:109px;" width="19" height="18" viewBox="0 0 19 18"><path d="M2.5 2 L16.5 16 M16.5 2 L2.5 16" stroke="#d0322d" stroke-width="3.4"/></svg>
<div style="position:absolute;left:319px;top:135px;width:275px;height:1px;background:#dcdcdc;"></div>
<div style="position:absolute;left:323.5px;top:142.5px;width:233px;height:52px;border:1px solid #d0d0d0;border-radius:2px;"></div>
<div class="t" style="left:331.0px;top:151.6px;font-size:13.6px;color:#555;">Sketch plane</div>
<div class="t" style="left:331.5px;top:173.1px;font-size:16px;color:#555;">Face of 1.5x1.5 Extrude</div>
<svg style="position:absolute;left:531px;top:176px;" width="13" height="12" viewBox="0 0 13 12"><path d="M1.5 1.5 L11 10.5 M11 1.5 L1.5 10.5" stroke="#555" stroke-width="1.4"/></svg>
<svg style="position:absolute;left:562px;top:146px;" width="25" height="24" viewBox="0 0 25 24"><circle cx="12.2" cy="11.8" r="10.5" fill="none" stroke="#444" stroke-width="1.5"/><circle cx="12.2" cy="11.8" r="7.7" fill="none" stroke="#444" stroke-width="1.1"/><path d="M12.2 5.5 V11.8 H18.5" fill="none" stroke="#444" stroke-width="1.5"/></svg>
<div style="position:absolute;left:324px;top:213.5px;width:15px;height:15px;background:#1b4fb8;border-radius:3px;"></div>
<svg style="position:absolute;left:324px;top:213.5px;" width="15" height="15" viewBox="0 0 15 15"><path d="M3.5 7.5 L6.5 10.5 L11.5 4.5" fill="none" stroke="#fff" stroke-width="2.2"/></svg>
<div class="t" style="left:344.7px;top:212.9px;font-size:16.5px;color:#555;">Disable imprinting</div>
<div style="position:absolute;left:324px;top:247px;width:13px;height:13px;border:1px solid #777;border-radius:3px;background:#fff;"></div>
<div class="t" style="left:344.7px;top:247.1px;font-size:16.5px;color:#555;">Show constraints</div>
<div style="position:absolute;left:324px;top:281px;width:15px;height:15px;background:#1b4fb8;border-radius:3px;"></div>
<svg style="position:absolute;left:324px;top:281px;" width="15" height="15" viewBox="0 0 15 15"><path d="M3.5 7.5 L6.5 10.5 L11.5 4.5" fill="none" stroke="#fff" stroke-width="2.2"/></svg>
<div class="t" style="left:344.7px;top:281.2px;font-size:16.5px;color:#555;">Show expressions</div>
<div style="position:absolute;left:324px;top:315.3px;width:15px;height:15px;background:#1b4fb8;border-radius:3px;"></div>
<svg style="position:absolute;left:324px;top:315.3px;" width="15" height="15" viewBox="0 0 15 15"><path d="M3.5 7.5 L6.5 10.5 L11.5 4.5" fill="none" stroke="#fff" stroke-width="2.2"/></svg>
<div class="t" style="left:344.7px;top:314.9px;font-size:16.5px;color:#555;">Show overdefined</div>
<svg style="position:absolute;left:571px;top:348px;" width="17" height="17" viewBox="0 0 17 17"><circle cx="8.5" cy="8.5" r="7.8" fill="#bdbdbd"/><text x="8.5" y="13.5" font-family="Liberation Sans" font-weight="700" font-size="13" fill="#fff" text-anchor="middle">?</text></svg>
<div style="position:absolute;left:2396px;top:0px;width:2px;height:1294px;background:#3a3a3a;"></div>
<svg style="position:absolute;left:2384px;top:1282px;" width="14" height="12" viewBox="0 0 14 12"><path d="M14 0 V12 H0 V11 Q11 11 12 0 Z" fill="#303030"/></svg>
</body></html>
